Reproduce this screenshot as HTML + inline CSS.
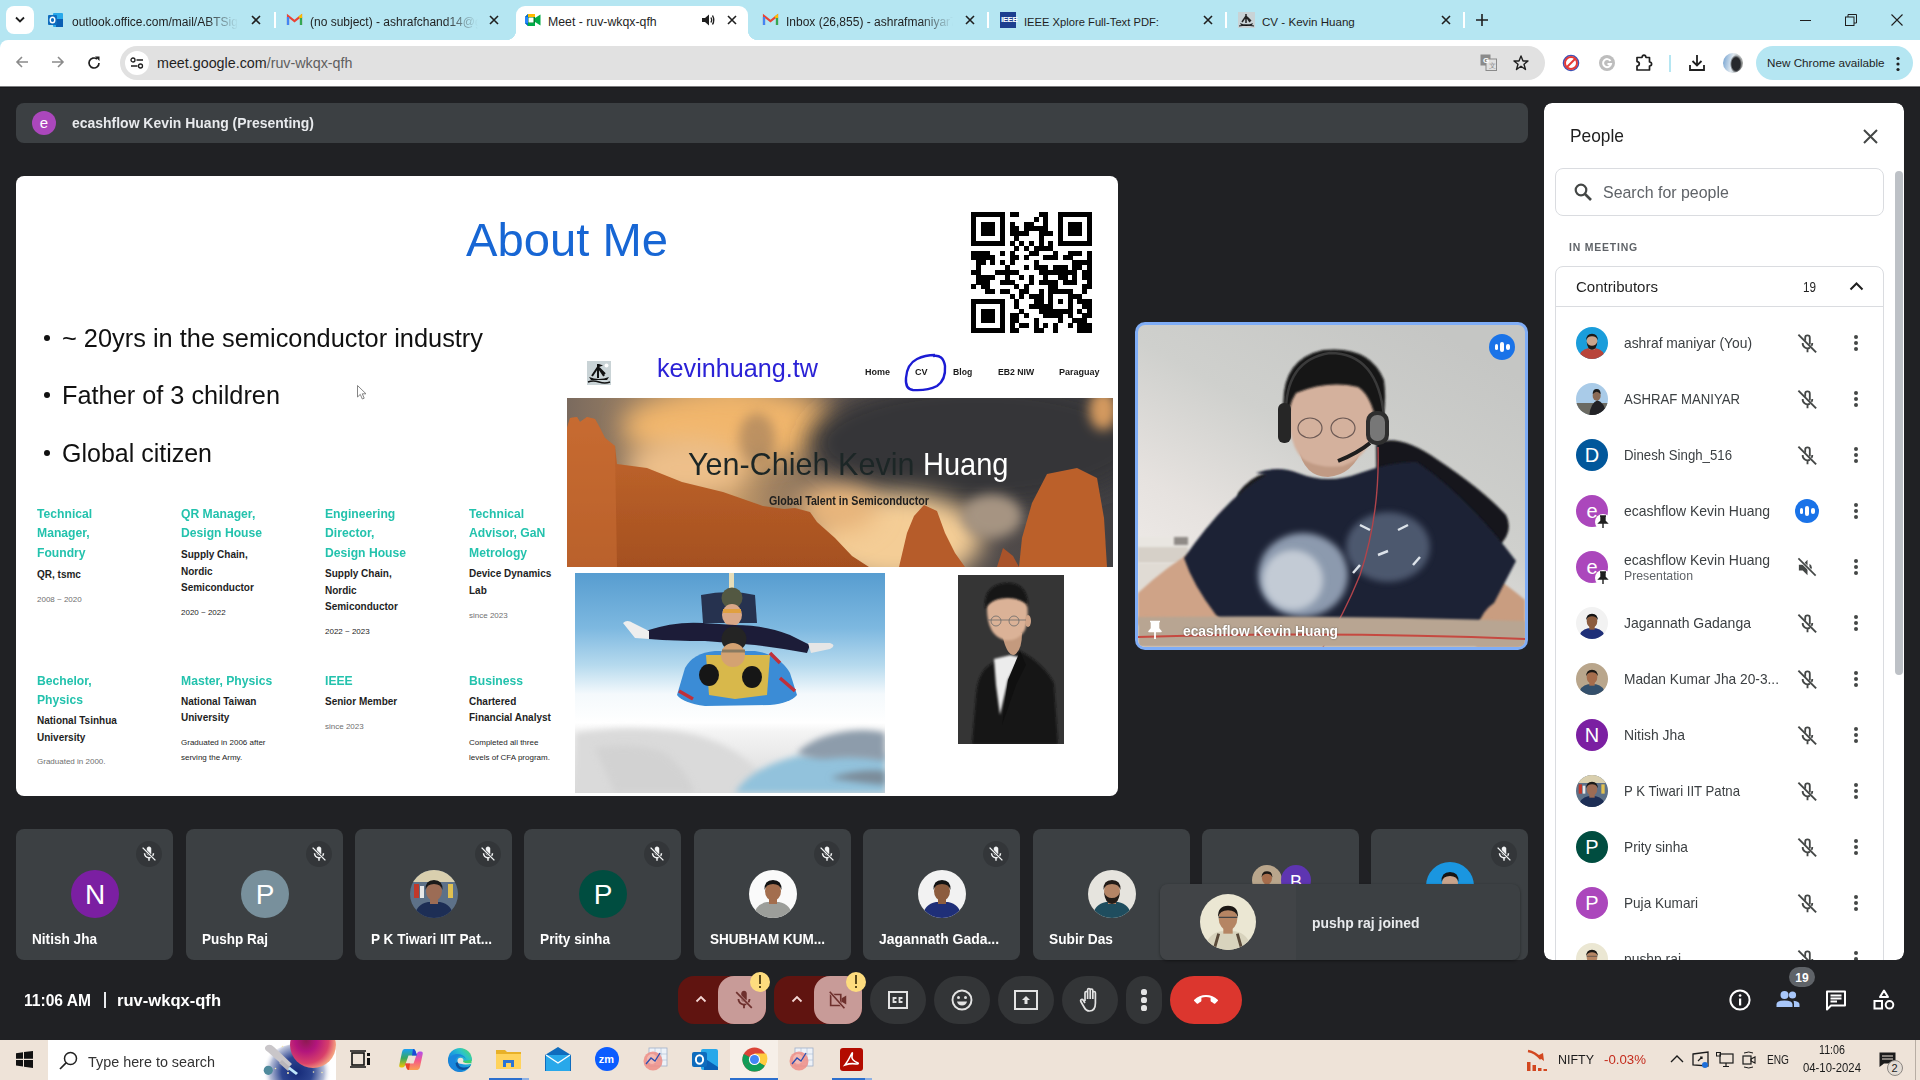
<!DOCTYPE html>
<html><head><meta charset="utf-8">
<style>
*{margin:0;padding:0;box-sizing:border-box}
html,body{width:1920px;height:1080px;overflow:hidden;background:#202124;font-family:"Liberation Sans",sans-serif}
.a{position:absolute}
svg{position:absolute;overflow:visible}
#tabs{left:0;top:0;width:1920px;height:48px;background:#b5e6f2}
#toolbar{left:0;top:40px;width:1920px;height:46px;background:#fff}
.tt{position:absolute;top:14.5px;font-size:12px;line-height:14px;color:#1f1f1f;white-space:nowrap;overflow:hidden;
 -webkit-mask-image:linear-gradient(to right,#000 80%,transparent)}
.sep{position:absolute;top:12px;width:2px;height:16px;background:#fff}
#meet{left:0;top:86px;width:1920px;height:954px;background:#202124}
#taskbar{left:0;top:1040px;width:1920px;height:40px;background:#eee3d8}
</style></head>
<body>
<!-- ================= TAB STRIP ================= -->
<div id="tabs" class="a">
  <div class="a" style="left:6px;top:6px;width:28px;height:28px;background:#fff;border-radius:8px"></div>
  <svg style="left:14px;top:16px" width="12" height="8" viewBox="0 0 12 8"><path d="M2 1.5 L6 5.5 L10 1.5" stroke="#1f1f1f" stroke-width="1.8" fill="none"/></svg>
  <!-- tab1 outlook -->
  <svg style="left:48px;top:12px" width="16" height="16" viewBox="0 0 16 16"><rect x="5" y="1" width="10" height="14" rx="1" fill="#28a8ea"/><rect x="8" y="7" width="7" height="8" fill="#0a5fb4"/><rect x="0" y="3" width="9" height="10" rx="1" fill="#0f6cbd"/><ellipse cx="4.5" cy="8" rx="2.3" ry="2.8" fill="none" stroke="#fff" stroke-width="1.4"/></svg>
  <div class="tt" style="left:72px;width:166px">outlook.office.com/mail/ABTSig</div>
  <svg style="left:251px;top:15px" width="10" height="10" viewBox="0 0 10 10"><path d="M1 1L9 9M9 1L1 9" stroke="#1f1f1f" stroke-width="1.6"/></svg>
  <div class="sep" style="left:274px"></div>
  <!-- tab2 gmail -->
  <svg style="left:287px;top:14px" width="15" height="12" viewBox="0 0 15 12"><path d="M1 11V2L7.5 7L14 2V11" fill="none" stroke="#ea4335" stroke-width="2.2"/><path d="M1 11V3" stroke="#4285f4" stroke-width="2.2"/><path d="M14 11V3" stroke="#34a853" stroke-width="2.2"/><path d="M12 3.5L14 2V4" stroke="#fbbc04" stroke-width="2.2"/></svg>
  <div class="tt" style="left:310px;width:168px">(no subject) - ashrafchand14@gmail</div>
  <svg style="left:489px;top:15px" width="10" height="10" viewBox="0 0 10 10"><path d="M1 1L9 9M9 1L1 9" stroke="#1f1f1f" stroke-width="1.6"/></svg>
  <!-- active tab -->
  <div class="a" style="left:516px;top:6px;width:232px;height:36px;background:#fff;border-radius:9px 9px 0 0"></div>
  <div class="a" style="left:506px;top:30px;width:10px;height:10px;background:radial-gradient(circle at 0 0,transparent 10px,#fff 10.5px)"></div>
  <div class="a" style="left:748px;top:30px;width:10px;height:10px;background:radial-gradient(circle at 100% 0,transparent 10px,#fff 10.5px)"></div>
  <svg style="left:525px;top:14px" width="16" height="12" viewBox="0 0 16 12"><path d="M0 3L3 0H10V12H3L0 9Z" fill="#00832d"/><path d="M0 3L3 0V12L0 9Z" fill="#0066da"/><path d="M3 0H10V3H3Z" fill="#ffba00"/><path d="M0 3H3V9H0Z" fill="#2684fc"/><path d="M3 9H10V12H3Z" fill="#00ac47"/><rect x="3.5" y="3.5" width="5" height="5" fill="#fff"/><path d="M10 4L15.5 0.5V11.5L10 8Z" fill="#00ac47"/></svg>
  <div class="tt" style="left:548px;width:150px;font-size:12.3px;-webkit-mask-image:none">Meet - ruv-wkqx-qfh</div>
  <svg style="left:701px;top:13px" width="14" height="14" viewBox="0 0 14 14"><path d="M1 5H4L8 1.5V12.5L4 9H1Z" fill="#1f1f1f"/><path d="M10 4.5Q11.5 7 10 9.5M11.5 2.5Q14 7 11.5 11.5" stroke="#1f1f1f" stroke-width="1.4" fill="none"/></svg>
  <svg style="left:727px;top:15px" width="10" height="10" viewBox="0 0 10 10"><path d="M1 1L9 9M9 1L1 9" stroke="#1f1f1f" stroke-width="1.6"/></svg>
  <!-- tab4 gmail inbox -->
  <svg style="left:763px;top:14px" width="15" height="12" viewBox="0 0 15 12"><path d="M1 11V2L7.5 7L14 2V11" fill="none" stroke="#ea4335" stroke-width="2.2"/><path d="M1 11V3" stroke="#4285f4" stroke-width="2.2"/><path d="M14 11V3" stroke="#34a853" stroke-width="2.2"/><path d="M12 3.5L14 2V4" stroke="#fbbc04" stroke-width="2.2"/></svg>
  <div class="tt" style="left:786px;width:167px">Inbox (26,855) - ashrafmaniyar7</div>
  <svg style="left:965px;top:15px" width="10" height="10" viewBox="0 0 10 10"><path d="M1 1L9 9M9 1L1 9" stroke="#1f1f1f" stroke-width="1.6"/></svg>
  <div class="sep" style="left:987px"></div>
  <!-- tab5 ieee -->
  <div class="a" style="left:1000px;top:12px;width:16px;height:16px;background:#1d3f8f"></div>
  <div class="a" style="left:1001px;top:15px;font-size:8px;font-weight:bold;color:#fff;letter-spacing:-0.5px">IEEE</div>
  <div class="tt" style="left:1024px;width:170px;font-size:11.2px;-webkit-mask-image:none">IEEE Xplore Full-Text PDF:</div>
  <svg style="left:1203px;top:15px" width="10" height="10" viewBox="0 0 10 10"><path d="M1 1L9 9M9 1L1 9" stroke="#1f1f1f" stroke-width="1.6"/></svg>
  <div class="sep" style="left:1225px"></div>
  <!-- tab6 cv -->
  <svg style="left:1238px;top:12px" width="17" height="16" viewBox="0 0 17 16"><rect width="17" height="16" fill="#c9d3d6"/><path d="M2 11Q8.5 14 15 11L14 13H3Z" fill="#222"/><path d="M8 2V11M4 10L8 4L12 10M9 5L13 9" stroke="#222" stroke-width="1.5" fill="none"/><path d="M1 14Q8 12 16 14" stroke="#222" stroke-width="1"/></svg>
  <div class="tt" style="left:1262px;width:170px;font-size:11.6px;-webkit-mask-image:none">CV - Kevin Huang</div>
  <svg style="left:1441px;top:15px" width="10" height="10" viewBox="0 0 10 10"><path d="M1 1L9 9M9 1L1 9" stroke="#1f1f1f" stroke-width="1.6"/></svg>
  <div class="sep" style="left:1463px"></div>
  <svg style="left:1475px;top:13px" width="14" height="14" viewBox="0 0 14 14"><path d="M7 1V13M1 7H13" stroke="#1f1f1f" stroke-width="1.6"/></svg>
  <!-- window controls -->
  <div class="a" style="left:1800px;top:20px;width:11px;height:1px;background:#1f1f1f"></div>
  <svg style="left:1845px;top:14px" width="12" height="12" viewBox="0 0 12 12"><rect x="0.5" y="3" width="8.5" height="8.5" fill="none" stroke="#1f1f1f" stroke-width="1"/><path d="M3 3V0.5H11.5V9H9" fill="none" stroke="#1f1f1f" stroke-width="1"/></svg>
  <svg style="left:1891px;top:14px" width="12" height="12" viewBox="0 0 12 12"><path d="M0.5 0.5L11.5 11.5M11.5 0.5L0.5 11.5" stroke="#1f1f1f" stroke-width="1.1"/></svg>
</div>
<!-- ================= TOOLBAR ================= -->
<div class="a" style="left:0;top:86px;width:1920px;height:1px;background:#7d7e80"></div><div class="a" style="left:0;top:87px;width:1920px;height:1px;background:#17181b"></div>
<div id="toolbar" class="a" style="border-radius:8px 0 0 0">
  <svg style="left:15px;top:15px" width="14" height="14" viewBox="0 0 14 14"><path d="M13 7H2M7 2L2 7L7 12" stroke="#8b8b8b" stroke-width="1.6" fill="none"/></svg>
  <svg style="left:51px;top:15px" width="14" height="14" viewBox="0 0 14 14"><path d="M1 7H12M7 2L12 7L7 12" stroke="#8b8b8b" stroke-width="1.6" fill="none"/></svg>
  <svg style="left:87px;top:16px" width="14" height="14" viewBox="0 0 14 14"><path d="M12 7A5 5 0 1 1 10 3" stroke="#1f1f1f" stroke-width="1.7" fill="none"/><path d="M8 0.5H12.5V5Z" fill="#1f1f1f"/></svg>
  <div class="a" style="left:120px;top:6px;width:1425px;height:34px;background:#e1e1e1;border-radius:17px"></div>
  <div class="a" style="left:125px;top:11px;width:24px;height:24px;background:#fff;border-radius:50%"></div>
  <svg style="left:130px;top:17px" width="14" height="12" viewBox="0 0 14 12"><circle cx="3" cy="3" r="2" fill="none" stroke="#1f1f1f" stroke-width="1.3"/><path d="M6.5 3H13M1 9H7.5" stroke="#1f1f1f" stroke-width="1.3"/><circle cx="10.5" cy="9" r="2" fill="none" stroke="#1f1f1f" stroke-width="1.3"/></svg>
  <div class="a" style="left:157px;top:15px;font-size:14.3px;line-height:16px;color:#1f1f1f;white-space:nowrap">meet.google.com<span style="color:#5e5e5e">/ruv-wkqx-qfh</span></div>
  <svg style="left:1480px;top:14px" width="17" height="17" viewBox="0 0 17 17"><rect x="0.5" y="0.5" width="10" height="11" fill="#8a8a8a"/><rect x="6" y="5" width="10.5" height="11.5" fill="#e1e1e1" stroke="#8a8a8a" stroke-width="1"/><text x="3" y="9" font-size="8" font-weight="bold" fill="#fff" font-family="Liberation Sans">G</text><text x="9" y="14" font-size="7" fill="#8a8a8a" font-family="Liberation Sans">文</text></svg>
  <svg style="left:1513px;top:15px" width="16" height="16" viewBox="0 0 16 16"><path d="M8 1L10 6H15L11 9.2L12.5 14.5L8 11.3L3.5 14.5L5 9.2L1 6H6Z" fill="none" stroke="#1f1f1f" stroke-width="1.4" stroke-linejoin="round"/></svg>
  <svg style="left:1562px;top:14px" width="18" height="18" viewBox="0 0 18 18"><circle cx="9" cy="9" r="7.5" fill="none" stroke="#3f51b5" stroke-width="1.6"/><circle cx="9" cy="9" r="6" fill="none" stroke="#e53935" stroke-width="2"/><path d="M5 13L13 5" stroke="#e53935" stroke-width="2"/></svg>
  <svg style="left:1598px;top:14px" width="18" height="18" viewBox="0 0 18 18"><circle cx="9" cy="9" r="8" fill="#bdbdbd"/><path d="M12.5 7A4 4 0 1 0 13 10H9.5" stroke="#fff" stroke-width="2" fill="none"/></svg>
  <svg style="left:1635px;top:13px" width="18" height="18" viewBox="0 0 18 18"><path d="M2 4.5H7Q7.3 2.2 9 2.2Q10.7 2.2 11 4.5H14.5V9Q16.6 9.2 16.6 11Q16.6 12.8 14.5 13V17H2V13Q4.3 12.8 4.3 10.8Q4.3 8.8 2 8.6Z" fill="none" stroke="#1f1f1f" stroke-width="1.7" stroke-linejoin="round"/></svg>
  <div class="a" style="left:1669px;top:15px;width:2px;height:17px;background:#b5e6f2"></div>
  <svg style="left:1688px;top:14px" width="18" height="18" viewBox="0 0 18 18"><path d="M9 1V11M4.5 7L9 11.5L13.5 7" stroke="#1f1f1f" stroke-width="1.8" fill="none"/><path d="M2 11V16H16V11" stroke="#1f1f1f" stroke-width="1.8" fill="none"/></svg>
  <div class="a" style="left:1723px;top:13px;width:20px;height:20px;border-radius:50%;background:radial-gradient(ellipse 30% 45% at 65% 55%,#26282c 0 70%,transparent 100%),linear-gradient(100deg,#6f9fd0 0%,#dfe8ef 45%,#8a8a86 100%)"></div>
  <div class="a" style="left:1756px;top:6px;width:157px;height:34px;background:#b5e6f2;border-radius:17px"></div>
  <div class="a" style="left:1767px;top:16px;font-size:11.7px;line-height:14px;color:#1f1f1f;white-space:nowrap">New Chrome available</div>
  <svg style="left:1895px;top:16px" width="6" height="16" viewBox="0 0 6 16"><circle cx="3" cy="2.5" r="1.6" fill="#1f1f1f"/><circle cx="3" cy="8" r="1.6" fill="#1f1f1f"/><circle cx="3" cy="13.5" r="1.6" fill="#1f1f1f"/></svg>
</div>
<div class="a" style="left:16px;top:103px;width:1512px;height:40px;background:#3c4043;border-radius:8px"></div>
<div class="a" style="left:32px;top:111px;width:24px;height:24px;border-radius:50%;background:#ab47bc"></div>
<div class="a" style="left:39.83px;top:115.30px;font-size:15px;line-height:15px;color:#fff;white-space:nowrap;">e</div>
<div class="a" style="left:72.00px;top:115.30px;font-size:15px;line-height:15px;color:#e8eaed;font-weight:bold;white-space:nowrap;transform:scaleX(0.9306);transform-origin:0 0;">ecashflow Kevin Huang (Presenting)</div>
<div class="a" style="left:16px;top:176px;width:1102px;height:620px;background:#fff;border-radius:8px"></div>
<div class="a" style="left:466.00px;top:216.21px;font-size:47px;line-height:47px;color:#1766d4;white-space:nowrap;transform:scaleX(1.0041);transform-origin:0 0;">About Me</div>
<div class="a" style="left:44px;top:335px;width:6px;height:6px;border-radius:50%;background:#111"></div>
<div class="a" style="left:44px;top:392px;width:6px;height:6px;border-radius:50%;background:#111"></div>
<div class="a" style="left:44px;top:450px;width:6px;height:6px;border-radius:50%;background:#111"></div>
<div class="a" style="left:62.00px;top:325.84px;font-size:25px;line-height:25px;color:#111;white-space:nowrap;transform:scaleX(1.0150);transform-origin:0 0;">~ 20yrs in the semiconductor industry</div>
<div class="a" style="left:62.00px;top:382.84px;font-size:25px;line-height:25px;color:#111;white-space:nowrap;transform:scaleX(1.0121);transform-origin:0 0;">Father of 3 children</div>
<div class="a" style="left:62.00px;top:440.84px;font-size:25px;line-height:25px;color:#111;white-space:nowrap;transform:scaleX(0.9995);transform-origin:0 0;">Global citizen</div>
<svg style="left:357px;top:385px;" width="10" height="15" viewBox="0 0 10 15"><path d="M0.5 0.5V12L3.3 9.4L5.3 14L7.2 13.2L5.3 8.8H9Z" fill="#fff" stroke="#777" stroke-width="0.9" stroke-linejoin="round"/></svg>
<div class="a" style="left:37.00px;top:506.50px;font-size:13px;line-height:13px;color:#23c2ad;font-weight:bold;white-space:nowrap;transform:scaleX(0.9350);transform-origin:0 0;">Technical</div>
<div class="a" style="left:37.00px;top:526.00px;font-size:13px;line-height:13px;color:#23c2ad;font-weight:bold;white-space:nowrap;transform:scaleX(0.9350);transform-origin:0 0;">Manager,</div>
<div class="a" style="left:37.00px;top:545.50px;font-size:13px;line-height:13px;color:#23c2ad;font-weight:bold;white-space:nowrap;transform:scaleX(0.9350);transform-origin:0 0;">Foundry</div>
<div class="a" style="left:37.00px;top:569.53px;font-size:10px;line-height:10px;color:#1e1e1e;font-weight:bold;white-space:nowrap;">QR, tsmc</div>
<div class="a" style="left:37.00px;top:596.23px;font-size:8px;line-height:8px;color:#6f6f6f;white-space:nowrap;">2008 ~ 2020</div>
<div class="a" style="left:181.00px;top:506.50px;font-size:13px;line-height:13px;color:#23c2ad;font-weight:bold;white-space:nowrap;transform:scaleX(0.9350);transform-origin:0 0;">QR Manager,</div>
<div class="a" style="left:181.00px;top:526.00px;font-size:13px;line-height:13px;color:#23c2ad;font-weight:bold;white-space:nowrap;transform:scaleX(0.9350);transform-origin:0 0;">Design House</div>
<div class="a" style="left:181.00px;top:549.53px;font-size:10px;line-height:10px;color:#1e1e1e;font-weight:bold;white-space:nowrap;">Supply Chain,</div>
<div class="a" style="left:181.00px;top:566.53px;font-size:10px;line-height:10px;color:#1e1e1e;font-weight:bold;white-space:nowrap;">Nordic</div>
<div class="a" style="left:181.00px;top:582.53px;font-size:10px;line-height:10px;color:#1e1e1e;font-weight:bold;white-space:nowrap;">Semiconductor</div>
<div class="a" style="left:181.00px;top:609.23px;font-size:8px;line-height:8px;color:#1e1e1e;white-space:nowrap;">2020 ~ 2022</div>
<div class="a" style="left:325.00px;top:506.50px;font-size:13px;line-height:13px;color:#23c2ad;font-weight:bold;white-space:nowrap;transform:scaleX(0.9350);transform-origin:0 0;">Engineering</div>
<div class="a" style="left:325.00px;top:526.00px;font-size:13px;line-height:13px;color:#23c2ad;font-weight:bold;white-space:nowrap;transform:scaleX(0.9350);transform-origin:0 0;">Director,</div>
<div class="a" style="left:325.00px;top:545.50px;font-size:13px;line-height:13px;color:#23c2ad;font-weight:bold;white-space:nowrap;transform:scaleX(0.9350);transform-origin:0 0;">Design House</div>
<div class="a" style="left:325.00px;top:569.03px;font-size:10px;line-height:10px;color:#1e1e1e;font-weight:bold;white-space:nowrap;">Supply Chain,</div>
<div class="a" style="left:325.00px;top:585.53px;font-size:10px;line-height:10px;color:#1e1e1e;font-weight:bold;white-space:nowrap;">Nordic</div>
<div class="a" style="left:325.00px;top:602.03px;font-size:10px;line-height:10px;color:#1e1e1e;font-weight:bold;white-space:nowrap;">Semiconductor</div>
<div class="a" style="left:325.00px;top:628.23px;font-size:8px;line-height:8px;color:#1e1e1e;white-space:nowrap;">2022 ~ 2023</div>
<div class="a" style="left:469.00px;top:506.50px;font-size:13px;line-height:13px;color:#23c2ad;font-weight:bold;white-space:nowrap;transform:scaleX(0.9350);transform-origin:0 0;">Technical</div>
<div class="a" style="left:469.00px;top:526.00px;font-size:13px;line-height:13px;color:#23c2ad;font-weight:bold;white-space:nowrap;transform:scaleX(0.9350);transform-origin:0 0;">Advisor, GaN</div>
<div class="a" style="left:469.00px;top:545.50px;font-size:13px;line-height:13px;color:#23c2ad;font-weight:bold;white-space:nowrap;transform:scaleX(0.9350);transform-origin:0 0;">Metrology</div>
<div class="a" style="left:469.00px;top:569.03px;font-size:10px;line-height:10px;color:#1e1e1e;font-weight:bold;white-space:nowrap;">Device Dynamics</div>
<div class="a" style="left:469.00px;top:585.53px;font-size:10px;line-height:10px;color:#1e1e1e;font-weight:bold;white-space:nowrap;">Lab</div>
<div class="a" style="left:469.00px;top:611.73px;font-size:8px;line-height:8px;color:#6f6f6f;white-space:nowrap;">since 2023</div>
<div class="a" style="left:37.00px;top:674.00px;font-size:13px;line-height:13px;color:#23c2ad;font-weight:bold;white-space:nowrap;transform:scaleX(0.9350);transform-origin:0 0;">Bechelor,</div>
<div class="a" style="left:37.00px;top:693.00px;font-size:13px;line-height:13px;color:#23c2ad;font-weight:bold;white-space:nowrap;transform:scaleX(0.9350);transform-origin:0 0;">Physics</div>
<div class="a" style="left:37.00px;top:715.53px;font-size:10px;line-height:10px;color:#1e1e1e;font-weight:bold;white-space:nowrap;">National Tsinhua</div>
<div class="a" style="left:37.00px;top:732.53px;font-size:10px;line-height:10px;color:#1e1e1e;font-weight:bold;white-space:nowrap;">University</div>
<div class="a" style="left:37.00px;top:758.23px;font-size:8px;line-height:8px;color:#6f6f6f;white-space:nowrap;">Graduated in 2000.</div>
<div class="a" style="left:181.00px;top:674.00px;font-size:13px;line-height:13px;color:#23c2ad;font-weight:bold;white-space:nowrap;transform:scaleX(0.9350);transform-origin:0 0;">Master, Physics</div>
<div class="a" style="left:181.00px;top:697.03px;font-size:10px;line-height:10px;color:#1e1e1e;font-weight:bold;white-space:nowrap;">National Taiwan</div>
<div class="a" style="left:181.00px;top:713.03px;font-size:10px;line-height:10px;color:#1e1e1e;font-weight:bold;white-space:nowrap;">University</div>
<div class="a" style="left:181.00px;top:739.23px;font-size:8px;line-height:8px;color:#1e1e1e;white-space:nowrap;">Graduated in 2006 after</div>
<div class="a" style="left:181.00px;top:754.23px;font-size:8px;line-height:8px;color:#1e1e1e;white-space:nowrap;">serving the Army.</div>
<div class="a" style="left:325.00px;top:674.00px;font-size:13px;line-height:13px;color:#23c2ad;font-weight:bold;white-space:nowrap;transform:scaleX(0.9350);transform-origin:0 0;">IEEE</div>
<div class="a" style="left:325.00px;top:697.03px;font-size:10px;line-height:10px;color:#1e1e1e;font-weight:bold;white-space:nowrap;">Senior Member</div>
<div class="a" style="left:325.00px;top:723.23px;font-size:8px;line-height:8px;color:#6f6f6f;white-space:nowrap;">since 2023</div>
<div class="a" style="left:469.00px;top:674.00px;font-size:13px;line-height:13px;color:#23c2ad;font-weight:bold;white-space:nowrap;transform:scaleX(0.9350);transform-origin:0 0;">Business</div>
<div class="a" style="left:469.00px;top:697.03px;font-size:10px;line-height:10px;color:#1e1e1e;font-weight:bold;white-space:nowrap;">Chartered</div>
<div class="a" style="left:469.00px;top:713.03px;font-size:10px;line-height:10px;color:#1e1e1e;font-weight:bold;white-space:nowrap;">Financial Analyst</div>
<div class="a" style="left:469.00px;top:739.23px;font-size:8px;line-height:8px;color:#1e1e1e;white-space:nowrap;">Completed all three</div>
<div class="a" style="left:469.00px;top:754.23px;font-size:8px;line-height:8px;color:#1e1e1e;white-space:nowrap;">levels of CFA program.</div>
<div class="a" style="left:587px;top:361px;width:24px;height:24px;background:#c9d3d6"></div>
<svg style="left:587px;top:361px;" width="24" height="24" viewBox="0 0 24 24"><path d="M11 3V17M5 15L11 6L17 15M12 7L18 13" stroke="#111" stroke-width="2" fill="none"/><path d="M12 3L16 4.5L12 6" fill="#111"/><path d="M2 16Q12 20 22 16L20 19H4Z" fill="#111"/><path d="M1 21Q6 19 12 21Q18 23 23 21" stroke="#111" stroke-width="1.4" fill="none"/><circle cx="19.5" cy="4.5" r="2" fill="#fff"/></svg>
<div class="a" style="left:657.40px;top:355.61px;font-size:25.5px;line-height:25.5px;color:#2b22d6;white-space:nowrap;transform:scaleX(0.9876);transform-origin:0 0;">kevinhuang.tw</div>
<div class="a" style="left:865.00px;top:367.88px;font-size:9px;line-height:9px;color:#1a1a1a;font-weight:bold;white-space:nowrap;transform:scaleX(0.9998);transform-origin:0 0;">Home</div>
<div class="a" style="left:915.00px;top:367.88px;font-size:9px;line-height:9px;color:#1a1a1a;font-weight:bold;white-space:nowrap;transform:scaleX(1.0078);transform-origin:0 0;">CV</div>
<div class="a" style="left:952.50px;top:367.88px;font-size:9px;line-height:9px;color:#1a1a1a;font-weight:bold;white-space:nowrap;transform:scaleX(0.9602);transform-origin:0 0;">Blog</div>
<div class="a" style="left:997.50px;top:367.88px;font-size:9px;line-height:9px;color:#1a1a1a;font-weight:bold;white-space:nowrap;transform:scaleX(0.9626);transform-origin:0 0;">EB2 NIW</div>
<div class="a" style="left:1059.40px;top:367.88px;font-size:9px;line-height:9px;color:#1a1a1a;font-weight:bold;white-space:nowrap;transform:scaleX(1.0019);transform-origin:0 0;">Paraguay</div>
<svg style="left:903px;top:352px;" width="44" height="40" viewBox="0 0 44 40"><path d="M30 4Q40 2 42 14Q43 28 34 34Q24 39 10 38Q2 37 3 26Q4 12 14 7Q22 3 32 3" fill="none" stroke="#1b1bd4" stroke-width="2.4"/></svg>
<svg style="left:567px;top:398px;overflow:hidden" width="546" height="169" viewBox="0 0 546 169">
<defs>
<filter id="c12" x="-50%" y="-50%" width="200%" height="200%"><feGaussianBlur stdDeviation="12"/></filter>
<filter id="c6" x="-50%" y="-50%" width="200%" height="200%"><feGaussianBlur stdDeviation="6"/></filter>
<filter id="c1" x="-50%" y="-50%" width="200%" height="200%"><feGaussianBlur stdDeviation="0.7"/></filter>
<linearGradient id="sky" x1="0" y1="0" x2="1" y2="0"><stop offset="0" stop-color="#7a6a5e"/><stop offset=".3" stop-color="#c49a68"/><stop offset=".5" stop-color="#6a5d56"/><stop offset="1" stop-color="#403f42"/></linearGradient>
<linearGradient id="rock" x1="0" y1="0" x2="0" y2="1"><stop offset="0" stop-color="#c5692f"/><stop offset="1" stop-color="#a5501f"/></linearGradient>
</defs>
<rect width="546" height="169" fill="url(#sky)"/>
<ellipse cx="165" cy="28" rx="110" ry="36" fill="#f1b66c" filter="url(#c12)"/>
<ellipse cx="120" cy="70" rx="60" ry="30" fill="#eec08a" filter="url(#c12)"/>
<ellipse cx="190" cy="40" rx="18" ry="25" fill="#7f6654" filter="url(#c6)" opacity=".45"/>
<ellipse cx="410" cy="45" rx="170" ry="65" fill="#363638" filter="url(#c12)"/>
<ellipse cx="330" cy="140" rx="85" ry="45" fill="#f4cd96" filter="url(#c12)"/>
<ellipse cx="270" cy="110" rx="40" ry="25" fill="#e9b67c" filter="url(#c12)"/>
<ellipse cx="425" cy="118" rx="30" ry="22" fill="#a69482" filter="url(#c6)"/>
<ellipse cx="536" cy="12" rx="14" ry="20" fill="#d49a5e" filter="url(#c6)"/>
<path d="M0 30L3 20L10 19L13 24L20 19L28 21L33 30L38 40L48 48L50 66L80 70L115 84L156 94L196 108L217 111L228 110L243 114L250 124L268 140L285 158L302 169H0Z" fill="url(#rock)" filter="url(#c1)"/>
<path d="M0 30L3 20L10 19L13 24L20 19L28 21L33 30L38 40L48 48L50 169H0Z" fill="#c86d33" opacity=".6"/>
<path d="M332 169L340 135L347 118L357 107L370 113L378 135L388 155L398 169Z" fill="#b65b2a" filter="url(#c1)"/>
<path d="M452 169L455 140L465 105L480 76L510 70L530 80L537 120L540 169Z" fill="#bb602c" filter="url(#c1)"/>
<path d="M430 169L436 150L446 158L452 169Z" fill="#a9532a"/>
</svg>
<div class="a" style="left:688.00px;top:449.34px;font-size:31.5px;line-height:31.5px;color:#1c2626;white-space:nowrap;transform:scaleX(0.9700);transform-origin:0 0;">Yen-Chieh Kevin </div>
<div class="a" style="left:923.00px;top:449.34px;font-size:31.5px;line-height:31.5px;color:#fff;white-space:nowrap;transform:scaleX(0.9211);transform-origin:0 0;">Huang</div>
<div class="a" style="left:768.50px;top:495.04px;font-size:12px;line-height:12px;color:#1e1e1e;font-weight:bold;white-space:nowrap;transform:scaleX(0.8899);transform-origin:0 0;">Global Talent in Semiconductor</div>
<svg style="left:575px;top:573px;overflow:hidden" width="310" height="220" viewBox="0 0 310 220">
<defs>
<filter id="s4" x="-50%" y="-50%" width="200%" height="200%"><feGaussianBlur stdDeviation="3"/></filter>
<filter id="s1" x="-50%" y="-50%" width="200%" height="200%"><feGaussianBlur stdDeviation="0.7"/></filter>
<linearGradient id="skyg" x1="0" y1="0" x2="0" y2="1"><stop offset="0" stop-color="#579dd0"/><stop offset=".25" stop-color="#7db8e0"/><stop offset=".42" stop-color="#b6daee"/><stop offset=".55" stop-color="#f4f9fc"/><stop offset=".68" stop-color="#ffffff"/><stop offset=".72" stop-color="#f4f4f4"/><stop offset="1" stop-color="#d8d8d8"/></linearGradient>
</defs>
<rect width="310" height="220" fill="url(#skyg)"/>
<path d="M0 160Q50 152 100 158Q150 165 180 195L200 220H0Z" fill="#dadada" filter="url(#s4)"/>
<path d="M20 175Q60 168 90 180Q110 195 120 220H40Z" fill="#cdcdcd" filter="url(#s4)" opacity=".6"/>
<path d="M160 220Q175 195 222 183Q265 175 310 182V220Z" fill="#92c2dc" filter="url(#s4)"/>
<path d="M222 180Q240 162 275 158Q295 156 310 160V188Q280 182 250 186Q235 186 222 180Z" fill="#8d9cab" filter="url(#s4)"/>
<path d="M255 205Q285 195 310 198V212Q285 210 255 205Z" fill="#7b8c9a" filter="url(#s4)"/>
<!-- instructor -->
<rect x="154" y="0" width="5" height="18" fill="#e6ddb8"/>
<path d="M126 22Q155 16 180 22L182 50H128Z" fill="#27324f" filter="url(#s1)"/>
<circle cx="157" cy="25" r="10.5" fill="#535842"/>
<ellipse cx="157" cy="42" rx="10" ry="11" fill="#d9a888"/>
<path d="M148 38H166" stroke="#e0a040" stroke-width="4"/>
<path d="M70 58Q100 48 128 50L160 52Q190 52 215 62L235 72L232 80Q205 75 180 72L130 68Q100 68 74 66Z" fill="#1b1d38" filter="url(#s1)"/>
<path d="M48 50Q52 46 58 50L74 58L74 66L60 65Z" fill="#eeeeee"/>
<path d="M233 70L255 70Q262 72 255 76L236 80Z" fill="#e6e6e6"/>
<!-- student -->
<path d="M110 95Q118 80 140 78L180 78Q205 82 215 100L222 122Q215 130 195 132L130 133Q108 130 102 122Z" fill="#3a8cd6" filter="url(#s1)"/>
<path d="M131 82H195L192 122L160 126L134 122Z" fill="#d8b84c" filter="url(#s1)"/>
<path d="M104 118L118 126M205 105L220 118M195 80L205 90" stroke="#c0303a" stroke-width="3.5"/>
<circle cx="159" cy="66" r="12.5" fill="#242424"/>
<ellipse cx="158" cy="82" rx="12" ry="12" fill="#d4a272"/>
<path d="M147 78H170" stroke="#8a7a60" stroke-width="3"/>
<ellipse cx="134" cy="102" rx="10" ry="11" fill="#161616"/>
<ellipse cx="177" cy="104" rx="10" ry="11" fill="#161616"/>
</svg>
<svg style="left:958px;top:575px;overflow:hidden" width="106" height="169" viewBox="0 0 106 169">
<defs><filter id="p1" x="-50%" y="-50%" width="200%" height="200%"><feGaussianBlur stdDeviation="0.8"/></filter></defs>
<rect width="106" height="169" fill="#353535"/>
<path d="M14 169L18 120Q20 95 35 88L50 80L62 76Q85 88 96 108L100 169Z" fill="#181818" filter="url(#p1)"/>
<path d="M36 84L52 80L62 82L50 105L42 140L38 110Z" fill="#ececec" filter="url(#p1)"/>
<path d="M62 76L50 105L44 150L58 110L68 90Z" fill="#101010"/>
<path d="M44 58Q48 80 56 80Q64 76 64 58Z" fill="#c49a7e"/>
<path d="M29 30Q28 60 46 65Q60 67 67 55Q71 44 69 28Q60 21 48 21Q35 21 29 30Z" fill="#dbb297" filter="url(#p1)"/>
<path d="M27 34Q25 10 48 8Q70 7 70 32Q67 24 50 23Q33 23 27 34Z" fill="#121212" filter="url(#p1)"/>
<ellipse cx="70" cy="46" rx="3" ry="6" fill="#d0a488"/>
<path d="M30 45H68" stroke="#6a6a6a" stroke-width=".8"/>
<circle cx="38" cy="46" r="5" fill="none" stroke="#6a6a6a" stroke-width=".8"/>
<circle cx="56" cy="46" r="5" fill="none" stroke="#6a6a6a" stroke-width=".8"/>
</svg>
<svg style="left:971.3px;top:212px" width="120.75" height="120.75" viewBox="0 0 25 25" shape-rendering="crispEdges"><g fill="#000"><rect x="0" y="0" width="1.02" height="1.02"/><rect x="1" y="0" width="1.02" height="1.02"/><rect x="2" y="0" width="1.02" height="1.02"/><rect x="3" y="0" width="1.02" height="1.02"/><rect x="4" y="0" width="1.02" height="1.02"/><rect x="5" y="0" width="1.02" height="1.02"/><rect x="6" y="0" width="1.02" height="1.02"/><rect x="8" y="0" width="1.02" height="1.02"/><rect x="9" y="0" width="1.02" height="1.02"/><rect x="14" y="0" width="1.02" height="1.02"/><rect x="15" y="0" width="1.02" height="1.02"/><rect x="18" y="0" width="1.02" height="1.02"/><rect x="19" y="0" width="1.02" height="1.02"/><rect x="20" y="0" width="1.02" height="1.02"/><rect x="21" y="0" width="1.02" height="1.02"/><rect x="22" y="0" width="1.02" height="1.02"/><rect x="23" y="0" width="1.02" height="1.02"/><rect x="24" y="0" width="1.02" height="1.02"/><rect x="0" y="1" width="1.02" height="1.02"/><rect x="6" y="1" width="1.02" height="1.02"/><rect x="13" y="1" width="1.02" height="1.02"/><rect x="15" y="1" width="1.02" height="1.02"/><rect x="18" y="1" width="1.02" height="1.02"/><rect x="24" y="1" width="1.02" height="1.02"/><rect x="0" y="2" width="1.02" height="1.02"/><rect x="2" y="2" width="1.02" height="1.02"/><rect x="3" y="2" width="1.02" height="1.02"/><rect x="4" y="2" width="1.02" height="1.02"/><rect x="6" y="2" width="1.02" height="1.02"/><rect x="8" y="2" width="1.02" height="1.02"/><rect x="11" y="2" width="1.02" height="1.02"/><rect x="12" y="2" width="1.02" height="1.02"/><rect x="15" y="2" width="1.02" height="1.02"/><rect x="18" y="2" width="1.02" height="1.02"/><rect x="20" y="2" width="1.02" height="1.02"/><rect x="21" y="2" width="1.02" height="1.02"/><rect x="22" y="2" width="1.02" height="1.02"/><rect x="24" y="2" width="1.02" height="1.02"/><rect x="0" y="3" width="1.02" height="1.02"/><rect x="2" y="3" width="1.02" height="1.02"/><rect x="3" y="3" width="1.02" height="1.02"/><rect x="4" y="3" width="1.02" height="1.02"/><rect x="6" y="3" width="1.02" height="1.02"/><rect x="8" y="3" width="1.02" height="1.02"/><rect x="9" y="3" width="1.02" height="1.02"/><rect x="11" y="3" width="1.02" height="1.02"/><rect x="12" y="3" width="1.02" height="1.02"/><rect x="13" y="3" width="1.02" height="1.02"/><rect x="14" y="3" width="1.02" height="1.02"/><rect x="15" y="3" width="1.02" height="1.02"/><rect x="18" y="3" width="1.02" height="1.02"/><rect x="20" y="3" width="1.02" height="1.02"/><rect x="21" y="3" width="1.02" height="1.02"/><rect x="22" y="3" width="1.02" height="1.02"/><rect x="24" y="3" width="1.02" height="1.02"/><rect x="0" y="4" width="1.02" height="1.02"/><rect x="2" y="4" width="1.02" height="1.02"/><rect x="3" y="4" width="1.02" height="1.02"/><rect x="4" y="4" width="1.02" height="1.02"/><rect x="6" y="4" width="1.02" height="1.02"/><rect x="8" y="4" width="1.02" height="1.02"/><rect x="9" y="4" width="1.02" height="1.02"/><rect x="10" y="4" width="1.02" height="1.02"/><rect x="11" y="4" width="1.02" height="1.02"/><rect x="14" y="4" width="1.02" height="1.02"/><rect x="15" y="4" width="1.02" height="1.02"/><rect x="16" y="4" width="1.02" height="1.02"/><rect x="18" y="4" width="1.02" height="1.02"/><rect x="20" y="4" width="1.02" height="1.02"/><rect x="21" y="4" width="1.02" height="1.02"/><rect x="22" y="4" width="1.02" height="1.02"/><rect x="24" y="4" width="1.02" height="1.02"/><rect x="0" y="5" width="1.02" height="1.02"/><rect x="6" y="5" width="1.02" height="1.02"/><rect x="9" y="5" width="1.02" height="1.02"/><rect x="14" y="5" width="1.02" height="1.02"/><rect x="18" y="5" width="1.02" height="1.02"/><rect x="24" y="5" width="1.02" height="1.02"/><rect x="0" y="6" width="1.02" height="1.02"/><rect x="1" y="6" width="1.02" height="1.02"/><rect x="2" y="6" width="1.02" height="1.02"/><rect x="3" y="6" width="1.02" height="1.02"/><rect x="4" y="6" width="1.02" height="1.02"/><rect x="5" y="6" width="1.02" height="1.02"/><rect x="6" y="6" width="1.02" height="1.02"/><rect x="8" y="6" width="1.02" height="1.02"/><rect x="10" y="6" width="1.02" height="1.02"/><rect x="12" y="6" width="1.02" height="1.02"/><rect x="14" y="6" width="1.02" height="1.02"/><rect x="16" y="6" width="1.02" height="1.02"/><rect x="18" y="6" width="1.02" height="1.02"/><rect x="19" y="6" width="1.02" height="1.02"/><rect x="20" y="6" width="1.02" height="1.02"/><rect x="21" y="6" width="1.02" height="1.02"/><rect x="22" y="6" width="1.02" height="1.02"/><rect x="23" y="6" width="1.02" height="1.02"/><rect x="24" y="6" width="1.02" height="1.02"/><rect x="9" y="7" width="1.02" height="1.02"/><rect x="11" y="7" width="1.02" height="1.02"/><rect x="13" y="7" width="1.02" height="1.02"/><rect x="14" y="7" width="1.02" height="1.02"/><rect x="15" y="7" width="1.02" height="1.02"/><rect x="16" y="7" width="1.02" height="1.02"/><rect x="0" y="8" width="1.02" height="1.02"/><rect x="1" y="8" width="1.02" height="1.02"/><rect x="2" y="8" width="1.02" height="1.02"/><rect x="3" y="8" width="1.02" height="1.02"/><rect x="6" y="8" width="1.02" height="1.02"/><rect x="8" y="8" width="1.02" height="1.02"/><rect x="12" y="8" width="1.02" height="1.02"/><rect x="13" y="8" width="1.02" height="1.02"/><rect x="17" y="8" width="1.02" height="1.02"/><rect x="20" y="8" width="1.02" height="1.02"/><rect x="21" y="8" width="1.02" height="1.02"/><rect x="22" y="8" width="1.02" height="1.02"/><rect x="24" y="8" width="1.02" height="1.02"/><rect x="0" y="9" width="1.02" height="1.02"/><rect x="1" y="9" width="1.02" height="1.02"/><rect x="2" y="9" width="1.02" height="1.02"/><rect x="3" y="9" width="1.02" height="1.02"/><rect x="4" y="9" width="1.02" height="1.02"/><rect x="8" y="9" width="1.02" height="1.02"/><rect x="9" y="9" width="1.02" height="1.02"/><rect x="11" y="9" width="1.02" height="1.02"/><rect x="15" y="9" width="1.02" height="1.02"/><rect x="16" y="9" width="1.02" height="1.02"/><rect x="17" y="9" width="1.02" height="1.02"/><rect x="19" y="9" width="1.02" height="1.02"/><rect x="20" y="9" width="1.02" height="1.02"/><rect x="24" y="9" width="1.02" height="1.02"/><rect x="1" y="10" width="1.02" height="1.02"/><rect x="2" y="10" width="1.02" height="1.02"/><rect x="4" y="10" width="1.02" height="1.02"/><rect x="6" y="10" width="1.02" height="1.02"/><rect x="8" y="10" width="1.02" height="1.02"/><rect x="13" y="10" width="1.02" height="1.02"/><rect x="21" y="10" width="1.02" height="1.02"/><rect x="22" y="10" width="1.02" height="1.02"/><rect x="23" y="10" width="1.02" height="1.02"/><rect x="24" y="10" width="1.02" height="1.02"/><rect x="1" y="11" width="1.02" height="1.02"/><rect x="7" y="11" width="1.02" height="1.02"/><rect x="11" y="11" width="1.02" height="1.02"/><rect x="13" y="11" width="1.02" height="1.02"/><rect x="14" y="11" width="1.02" height="1.02"/><rect x="15" y="11" width="1.02" height="1.02"/><rect x="17" y="11" width="1.02" height="1.02"/><rect x="18" y="11" width="1.02" height="1.02"/><rect x="19" y="11" width="1.02" height="1.02"/><rect x="21" y="11" width="1.02" height="1.02"/><rect x="22" y="11" width="1.02" height="1.02"/><rect x="24" y="11" width="1.02" height="1.02"/><rect x="0" y="12" width="1.02" height="1.02"/><rect x="1" y="12" width="1.02" height="1.02"/><rect x="5" y="12" width="1.02" height="1.02"/><rect x="6" y="12" width="1.02" height="1.02"/><rect x="7" y="12" width="1.02" height="1.02"/><rect x="8" y="12" width="1.02" height="1.02"/><rect x="9" y="12" width="1.02" height="1.02"/><rect x="14" y="12" width="1.02" height="1.02"/><rect x="15" y="12" width="1.02" height="1.02"/><rect x="16" y="12" width="1.02" height="1.02"/><rect x="17" y="12" width="1.02" height="1.02"/><rect x="18" y="12" width="1.02" height="1.02"/><rect x="19" y="12" width="1.02" height="1.02"/><rect x="20" y="12" width="1.02" height="1.02"/><rect x="21" y="12" width="1.02" height="1.02"/><rect x="23" y="12" width="1.02" height="1.02"/><rect x="24" y="12" width="1.02" height="1.02"/><rect x="1" y="13" width="1.02" height="1.02"/><rect x="2" y="13" width="1.02" height="1.02"/><rect x="3" y="13" width="1.02" height="1.02"/><rect x="4" y="13" width="1.02" height="1.02"/><rect x="7" y="13" width="1.02" height="1.02"/><rect x="10" y="13" width="1.02" height="1.02"/><rect x="12" y="13" width="1.02" height="1.02"/><rect x="15" y="13" width="1.02" height="1.02"/><rect x="18" y="13" width="1.02" height="1.02"/><rect x="19" y="13" width="1.02" height="1.02"/><rect x="21" y="13" width="1.02" height="1.02"/><rect x="23" y="13" width="1.02" height="1.02"/><rect x="24" y="13" width="1.02" height="1.02"/><rect x="1" y="14" width="1.02" height="1.02"/><rect x="2" y="14" width="1.02" height="1.02"/><rect x="3" y="14" width="1.02" height="1.02"/><rect x="6" y="14" width="1.02" height="1.02"/><rect x="7" y="14" width="1.02" height="1.02"/><rect x="8" y="14" width="1.02" height="1.02"/><rect x="12" y="14" width="1.02" height="1.02"/><rect x="14" y="14" width="1.02" height="1.02"/><rect x="15" y="14" width="1.02" height="1.02"/><rect x="16" y="14" width="1.02" height="1.02"/><rect x="17" y="14" width="1.02" height="1.02"/><rect x="19" y="14" width="1.02" height="1.02"/><rect x="20" y="14" width="1.02" height="1.02"/><rect x="21" y="14" width="1.02" height="1.02"/><rect x="24" y="14" width="1.02" height="1.02"/><rect x="0" y="15" width="1.02" height="1.02"/><rect x="2" y="15" width="1.02" height="1.02"/><rect x="3" y="15" width="1.02" height="1.02"/><rect x="9" y="15" width="1.02" height="1.02"/><rect x="11" y="15" width="1.02" height="1.02"/><rect x="16" y="15" width="1.02" height="1.02"/><rect x="17" y="15" width="1.02" height="1.02"/><rect x="23" y="15" width="1.02" height="1.02"/><rect x="24" y="15" width="1.02" height="1.02"/><rect x="3" y="16" width="1.02" height="1.02"/><rect x="4" y="16" width="1.02" height="1.02"/><rect x="6" y="16" width="1.02" height="1.02"/><rect x="7" y="16" width="1.02" height="1.02"/><rect x="10" y="16" width="1.02" height="1.02"/><rect x="11" y="16" width="1.02" height="1.02"/><rect x="14" y="16" width="1.02" height="1.02"/><rect x="16" y="16" width="1.02" height="1.02"/><rect x="17" y="16" width="1.02" height="1.02"/><rect x="18" y="16" width="1.02" height="1.02"/><rect x="19" y="16" width="1.02" height="1.02"/><rect x="20" y="16" width="1.02" height="1.02"/><rect x="23" y="16" width="1.02" height="1.02"/><rect x="8" y="17" width="1.02" height="1.02"/><rect x="10" y="17" width="1.02" height="1.02"/><rect x="12" y="17" width="1.02" height="1.02"/><rect x="13" y="17" width="1.02" height="1.02"/><rect x="14" y="17" width="1.02" height="1.02"/><rect x="16" y="17" width="1.02" height="1.02"/><rect x="20" y="17" width="1.02" height="1.02"/><rect x="21" y="17" width="1.02" height="1.02"/><rect x="22" y="17" width="1.02" height="1.02"/><rect x="0" y="18" width="1.02" height="1.02"/><rect x="1" y="18" width="1.02" height="1.02"/><rect x="2" y="18" width="1.02" height="1.02"/><rect x="3" y="18" width="1.02" height="1.02"/><rect x="4" y="18" width="1.02" height="1.02"/><rect x="5" y="18" width="1.02" height="1.02"/><rect x="6" y="18" width="1.02" height="1.02"/><rect x="9" y="18" width="1.02" height="1.02"/><rect x="13" y="18" width="1.02" height="1.02"/><rect x="14" y="18" width="1.02" height="1.02"/><rect x="16" y="18" width="1.02" height="1.02"/><rect x="18" y="18" width="1.02" height="1.02"/><rect x="20" y="18" width="1.02" height="1.02"/><rect x="22" y="18" width="1.02" height="1.02"/><rect x="23" y="18" width="1.02" height="1.02"/><rect x="24" y="18" width="1.02" height="1.02"/><rect x="0" y="19" width="1.02" height="1.02"/><rect x="6" y="19" width="1.02" height="1.02"/><rect x="9" y="19" width="1.02" height="1.02"/><rect x="12" y="19" width="1.02" height="1.02"/><rect x="13" y="19" width="1.02" height="1.02"/><rect x="14" y="19" width="1.02" height="1.02"/><rect x="15" y="19" width="1.02" height="1.02"/><rect x="16" y="19" width="1.02" height="1.02"/><rect x="20" y="19" width="1.02" height="1.02"/><rect x="23" y="19" width="1.02" height="1.02"/><rect x="24" y="19" width="1.02" height="1.02"/><rect x="0" y="20" width="1.02" height="1.02"/><rect x="2" y="20" width="1.02" height="1.02"/><rect x="3" y="20" width="1.02" height="1.02"/><rect x="4" y="20" width="1.02" height="1.02"/><rect x="6" y="20" width="1.02" height="1.02"/><rect x="10" y="20" width="1.02" height="1.02"/><rect x="14" y="20" width="1.02" height="1.02"/><rect x="15" y="20" width="1.02" height="1.02"/><rect x="16" y="20" width="1.02" height="1.02"/><rect x="17" y="20" width="1.02" height="1.02"/><rect x="18" y="20" width="1.02" height="1.02"/><rect x="19" y="20" width="1.02" height="1.02"/><rect x="20" y="20" width="1.02" height="1.02"/><rect x="22" y="20" width="1.02" height="1.02"/><rect x="24" y="20" width="1.02" height="1.02"/><rect x="0" y="21" width="1.02" height="1.02"/><rect x="2" y="21" width="1.02" height="1.02"/><rect x="3" y="21" width="1.02" height="1.02"/><rect x="4" y="21" width="1.02" height="1.02"/><rect x="6" y="21" width="1.02" height="1.02"/><rect x="8" y="21" width="1.02" height="1.02"/><rect x="9" y="21" width="1.02" height="1.02"/><rect x="11" y="21" width="1.02" height="1.02"/><rect x="15" y="21" width="1.02" height="1.02"/><rect x="16" y="21" width="1.02" height="1.02"/><rect x="17" y="21" width="1.02" height="1.02"/><rect x="18" y="21" width="1.02" height="1.02"/><rect x="20" y="21" width="1.02" height="1.02"/><rect x="23" y="21" width="1.02" height="1.02"/><rect x="24" y="21" width="1.02" height="1.02"/><rect x="0" y="22" width="1.02" height="1.02"/><rect x="2" y="22" width="1.02" height="1.02"/><rect x="3" y="22" width="1.02" height="1.02"/><rect x="4" y="22" width="1.02" height="1.02"/><rect x="6" y="22" width="1.02" height="1.02"/><rect x="8" y="22" width="1.02" height="1.02"/><rect x="9" y="22" width="1.02" height="1.02"/><rect x="13" y="22" width="1.02" height="1.02"/><rect x="18" y="22" width="1.02" height="1.02"/><rect x="21" y="22" width="1.02" height="1.02"/><rect x="22" y="22" width="1.02" height="1.02"/><rect x="23" y="22" width="1.02" height="1.02"/><rect x="0" y="23" width="1.02" height="1.02"/><rect x="6" y="23" width="1.02" height="1.02"/><rect x="8" y="23" width="1.02" height="1.02"/><rect x="10" y="23" width="1.02" height="1.02"/><rect x="11" y="23" width="1.02" height="1.02"/><rect x="13" y="23" width="1.02" height="1.02"/><rect x="15" y="23" width="1.02" height="1.02"/><rect x="17" y="23" width="1.02" height="1.02"/><rect x="20" y="23" width="1.02" height="1.02"/><rect x="22" y="23" width="1.02" height="1.02"/><rect x="23" y="23" width="1.02" height="1.02"/><rect x="24" y="23" width="1.02" height="1.02"/><rect x="0" y="24" width="1.02" height="1.02"/><rect x="1" y="24" width="1.02" height="1.02"/><rect x="2" y="24" width="1.02" height="1.02"/><rect x="3" y="24" width="1.02" height="1.02"/><rect x="4" y="24" width="1.02" height="1.02"/><rect x="5" y="24" width="1.02" height="1.02"/><rect x="6" y="24" width="1.02" height="1.02"/><rect x="8" y="24" width="1.02" height="1.02"/><rect x="9" y="24" width="1.02" height="1.02"/><rect x="13" y="24" width="1.02" height="1.02"/><rect x="14" y="24" width="1.02" height="1.02"/><rect x="17" y="24" width="1.02" height="1.02"/><rect x="22" y="24" width="1.02" height="1.02"/><rect x="23" y="24" width="1.02" height="1.02"/><rect x="24" y="24" width="1.02" height="1.02"/></g></svg>
<div class="a" style="left:1135px;top:322px;width:393px;height:328px;border:3px solid #7fadf6;border-radius:10px;background:#7fadf6"></div>
<div class="a" style="left:1138px;top:325px;width:387px;height:322px;border-radius:7px;overflow:hidden">
<svg style="left:0;top:0;overflow:hidden" width="387" height="322" viewBox="0 0 387 322">
<defs>
<filter id="b8" x="-50%" y="-50%" width="200%" height="200%"><feGaussianBlur stdDeviation="10"/></filter>
<filter id="b3" x="-50%" y="-50%" width="200%" height="200%"><feGaussianBlur stdDeviation="3"/></filter>
<filter id="b1" x="-50%" y="-50%" width="200%" height="200%"><feGaussianBlur stdDeviation="1"/></filter>
<linearGradient id="wall" x1="0.1" y1="0.95" x2="0.75" y2="0"><stop offset="0" stop-color="#f2eeeb"/><stop offset=".3" stop-color="#e6e2df"/><stop offset=".6" stop-color="#cfd0cd"/><stop offset="1" stop-color="#c5c6c4"/></linearGradient>
</defs>
<rect width="387" height="322" fill="url(#wall)"/>

<!-- left shelf -->
<rect x="0" y="212" width="52" height="10" fill="#e9e6e1" filter="url(#b1)"/>
<rect x="0" y="222" width="50" height="16" fill="#d6d0c8" filter="url(#b1)"/>
<rect x="36" y="212" width="14" height="8" fill="#8f8a86" filter="url(#b1)"/>
<path d="M0 238H48V300H0Z" fill="#e0dbd4" filter="url(#b1)"/>
<!-- chair -->
<path d="M238 118Q262 108 300 135Q345 165 368 190Q376 205 362 220L352 300H240Z" fill="#18181b" filter="url(#b1)"/>
<path d="M100 168Q112 152 128 148L140 160L95 235Z" fill="#1b1b1f" filter="url(#b1)"/>
<!-- arms -->
<path d="M0 268Q30 240 62 222L85 230L92 300H0Z" fill="#cfa387" filter="url(#b1)"/>
<path d="M340 240Q372 262 387 275V322H338Z" fill="#c99d80" filter="url(#b1)"/>
<!-- shirt -->
<path d="M118 148Q140 140 160 148Q190 160 222 148Q255 136 279 137Q330 172 378 236L356 278Q345 285 340 300H88L78 290Q55 260 46 233Q90 170 128 150Z" fill="#1d2236" filter="url(#b1)"/>
<!-- wave print -->
<ellipse cx="165" cy="250" rx="45" ry="42" fill="#8c9aae" filter="url(#b3)"/>
<ellipse cx="155" cy="255" rx="30" ry="30" fill="#c3cbd5" filter="url(#b3)"/>
<ellipse cx="250" cy="222" rx="42" ry="35" fill="#5d6b82" filter="url(#b3)" opacity=".75"/>
<path d="M222 200L232 205M260 205L270 200M240 230L250 226M275 240L282 232M215 248L222 240" stroke="#dde3ea" stroke-width="2.5"/>
<!-- neck / face -->
<path d="M160 122Q166 152 190 152Q215 150 225 122Z" fill="#c09a84"/>
<path d="M150 70Q149 125 168 136Q185 144 205 141Q233 132 238 95Q238 60 230 55H155Z" fill="#d4b19d" filter="url(#b1)"/>
<!-- hair -->
<path d="M146 90Q140 35 185 25Q232 20 246 55Q250 85 240 110Q236 72 220 62Q190 55 158 68Q150 80 150 100Z" fill="#141414" filter="url(#b1)"/>
<!-- headset -->
<path d="M148 92Q146 35 192 28Q240 28 246 92" fill="none" stroke="#3a3a3a" stroke-width="2.5"/>
<rect x="140" y="78" width="13" height="40" rx="6" fill="#262626"/>
<rect x="228" y="86" width="23" height="34" rx="10" fill="#2e2e2e"/>
<rect x="232" y="90" width="15" height="26" rx="7" fill="#777"/>
<path d="M232 118Q220 128 200 136" stroke="#1e1e1e" stroke-width="4"/>
<!-- glasses -->
<ellipse cx="172" cy="103" rx="12" ry="10" fill="none" stroke="#6d5a55" stroke-width="1.2"/>
<ellipse cx="205" cy="103" rx="12" ry="10" fill="none" stroke="#6d5a55" stroke-width="1.2"/>
<!-- red cable -->
<path d="M240 122Q242 190 222 250Q205 292 185 322" stroke="#b0444b" stroke-width="1.4" fill="none"/>
<!-- desk -->
<path d="M0 292Q200 290 387 296V322H0Z" fill="#b8a592" filter="url(#b1)"/>
<path d="M0 312Q200 306 387 314" stroke="#c64940" stroke-width="2" fill="none"/>
</svg>
</div>
<div class="a" style="left:1489px;top:334px;width:26px;height:26px;border-radius:50%;background:#1a73e8"></div>
<div class="a" style="left:1494.5px;top:344px;width:3.5px;height:6px;background:#fff;border-radius:2px"></div>
<div class="a" style="left:1500.2px;top:342px;width:3.5px;height:10px;background:#fff;border-radius:2px"></div>
<div class="a" style="left:1506px;top:344px;width:3.5px;height:6px;background:#fff;border-radius:2px"></div>
<svg style="left:1148px;top:620px;" width="14" height="20" viewBox="0 0 14 20"><path d="M2 1.5H12M3.5 1.5V8.5L1 11.5H13L10.5 8.5V1.5" fill="#fff" stroke="#fff" stroke-width="1.6" stroke-linejoin="round"/><path d="M7 11.5V19" stroke="#fff" stroke-width="1.8"/></svg>
<div class="a" style="left:1183.00px;top:623.30px;font-size:15px;line-height:15px;color:#fff;font-weight:bold;white-space:nowrap;transform:scaleX(0.9206);transform-origin:0 0;text-shadow:0 0 2px rgba(0,0,0,.5)">ecashflow Kevin Huang</div>
<div class="a" style="left:0;top:0;width:1920px;height:1080px;clip-path:inset(103px 16px 120px 1544px round 8px)">
<div class="a" style="left:1544px;top:103px;width:360px;height:857px;background:#fff;border-radius:8px;overflow:hidden"></div>
<div class="a" style="left:1569.50px;top:126.42px;font-size:19px;line-height:19px;color:#1f1f1f;white-space:nowrap;transform:scaleX(0.9127);transform-origin:0 0;">People</div>
<svg style="left:1863px;top:129px;" width="15" height="15" viewBox="0 0 15 15"><path d="M1 1L14 14M14 1L1 14" stroke="#444746" stroke-width="2"/></svg>
<div class="a" style="left:1555px;top:168px;width:329px;height:47.5px;border:1px solid #dadce0;border-radius:8px"></div>
<svg style="left:1574px;top:183px;" width="18" height="18" viewBox="0 0 18 18"><circle cx="7" cy="7" r="5.3" fill="none" stroke="#444746" stroke-width="2.2"/><path d="M11 11L17 17" stroke="#444746" stroke-width="2.6"/></svg>
<div class="a" style="left:1603.00px;top:184.78px;font-size:16.8px;line-height:16.8px;color:#5f6368;white-space:nowrap;transform:scaleX(0.9501);transform-origin:0 0;">Search for people</div>
<div class="a" style="left:1569.00px;top:242.27px;font-size:11.5px;line-height:11.5px;color:#5f6368;font-weight:bold;white-space:nowrap;transform:scaleX(0.9069);transform-origin:0 0;letter-spacing:0.9px;">IN MEETING</div>
<div class="a" style="left:1555px;top:265.5px;width:329px;height:720px;border:1px solid #dadce0;border-radius:8px 8px 0 0"></div>
<div class="a" style="left:1556px;top:306px;width:328px;height:1px;background:#dadce0"></div>
<div class="a" style="left:1576.00px;top:278.80px;font-size:15px;line-height:15px;color:#1f1f1f;white-space:nowrap;transform:scaleX(1.0036);transform-origin:0 0;">Contributors</div>
<div class="a" style="left:1802.50px;top:278.80px;font-size:15px;line-height:15px;color:#1f1f1f;white-space:nowrap;transform:scaleX(0.7791);transform-origin:0 0;">19</div>
<svg style="left:1849px;top:281px;" width="15" height="10" viewBox="0 0 15 10"><path d="M1.5 8.5L7.5 2.5L13.5 8.5" stroke="#1f1f1f" stroke-width="2" fill="none"/></svg>
<svg style="left:1576px;top:327px;border-radius:50%" width="32" height="32" viewBox="0 0 48 48"><defs><clipPath id="av1"><circle cx="24" cy="24" r="24"/></clipPath></defs><g clip-path="url(#av1)"><rect width="48" height="48" fill="#1a9ddb"/><path d="M4 48Q6 34 18 32H30Q42 34 44 48Z" fill="#b8443a"/><rect x="20" y="27" width="8" height="7" fill="#c9a48c"/><ellipse cx="24" cy="21" rx="8" ry="10" fill="#c9a48c"/><path d="M15.5 20Q15 10 24 10Q33 10 32.5 20Q31 14 24 14Q17 14 15.5 20Z" fill="#1a1a1a"/><path d="M16 22Q17 34 24 34Q31 34 32 22Q30 28 24 28Q18 28 16 22Z" fill="#1a1a1a"/></g></svg>
<div class="a" style="left:1624.00px;top:335.73px;font-size:14.5px;line-height:14.5px;color:#3c4043;white-space:nowrap;transform:scaleX(0.9548);transform-origin:0 0;">ashraf maniyar (You)</div>
<svg style="left:1796px;top:332px;" width="23" height="23" viewBox="0 0 24 24"><path d="M9.6 9V6A2.4 2.4 0 0 1 14.4 6V13" fill="none" stroke="#444746" stroke-width="1.9"/><path d="M7 11.5A5 5 0 0 0 14.5 16.3M17 11.5Q17 13.2 16.2 14.5M12 17V21" fill="none" stroke="#444746" stroke-width="1.9"/><path d="M2.5 2.8L21 21.2" stroke="#444746" stroke-width="2"/></svg>
<div class="a" style="left:1854px;top:335px;width:4px;height:4px;border-radius:50%;background:#444746"></div>
<div class="a" style="left:1854px;top:341px;width:4px;height:4px;border-radius:50%;background:#444746"></div>
<div class="a" style="left:1854px;top:347px;width:4px;height:4px;border-radius:50%;background:#444746"></div>
<svg style="left:1576px;top:383px;border-radius:50%" width="32" height="32" viewBox="0 0 48 48"><defs><clipPath id="av2"><circle cx="24" cy="24" r="24"/></clipPath></defs><g clip-path="url(#av2)"><rect width="48" height="48" fill="#a9cbe8"/><rect y="30" width="48" height="18" fill="#6b6a62"/><path d="M20 48Q22 30 32 26Q42 28 46 48Z" fill="#222226"/><ellipse cx="31" cy="19" rx="6" ry="7.5" fill="#8a6a55"/><path d="M25 17Q25 9 31 9Q37 9 37 17Q34 13 31 13Q28 13 25 17Z" fill="#1a1a1a"/></g></svg>
<div class="a" style="left:1624.00px;top:391.73px;font-size:14.5px;line-height:14.5px;color:#3c4043;white-space:nowrap;transform:scaleX(0.9074);transform-origin:0 0;">ASHRAF MANIYAR</div>
<svg style="left:1796px;top:388px;" width="23" height="23" viewBox="0 0 24 24"><path d="M9.6 9V6A2.4 2.4 0 0 1 14.4 6V13" fill="none" stroke="#444746" stroke-width="1.9"/><path d="M7 11.5A5 5 0 0 0 14.5 16.3M17 11.5Q17 13.2 16.2 14.5M12 17V21" fill="none" stroke="#444746" stroke-width="1.9"/><path d="M2.5 2.8L21 21.2" stroke="#444746" stroke-width="2"/></svg>
<div class="a" style="left:1854px;top:391px;width:4px;height:4px;border-radius:50%;background:#444746"></div>
<div class="a" style="left:1854px;top:397px;width:4px;height:4px;border-radius:50%;background:#444746"></div>
<div class="a" style="left:1854px;top:403px;width:4px;height:4px;border-radius:50%;background:#444746"></div>
<div class="a" style="left:1576px;top:439px;width:32px;height:32px;border-radius:50%;background:#01579b"></div>
<div class="a" style="left:1584.78px;top:445.07px;font-size:20px;line-height:20px;color:#fff;white-space:nowrap;">D</div>
<div class="a" style="left:1624.00px;top:447.73px;font-size:14.5px;line-height:14.5px;color:#3c4043;white-space:nowrap;transform:scaleX(0.9113);transform-origin:0 0;">Dinesh Singh_516</div>
<svg style="left:1796px;top:444px;" width="23" height="23" viewBox="0 0 24 24"><path d="M9.6 9V6A2.4 2.4 0 0 1 14.4 6V13" fill="none" stroke="#444746" stroke-width="1.9"/><path d="M7 11.5A5 5 0 0 0 14.5 16.3M17 11.5Q17 13.2 16.2 14.5M12 17V21" fill="none" stroke="#444746" stroke-width="1.9"/><path d="M2.5 2.8L21 21.2" stroke="#444746" stroke-width="2"/></svg>
<div class="a" style="left:1854px;top:447px;width:4px;height:4px;border-radius:50%;background:#444746"></div>
<div class="a" style="left:1854px;top:453px;width:4px;height:4px;border-radius:50%;background:#444746"></div>
<div class="a" style="left:1854px;top:459px;width:4px;height:4px;border-radius:50%;background:#444746"></div>
<div class="a" style="left:1576px;top:495px;width:32px;height:32px;border-radius:50%;background:#ab47bc"></div>
<div class="a" style="left:1586.44px;top:501.07px;font-size:20px;line-height:20px;color:#fff;white-space:nowrap;">e</div>
<div class="a" style="left:1595px;top:514px;width:16px;height:16px;border-radius:50%;background:#fff"></div>
<svg style="left:1598px;top:515px;" width="10" height="13" viewBox="0 0 10 13"><path d="M2 1H8M3 1V6L1 8H9L7 6V1M5 8V13" stroke="#1f1f1f" stroke-width="1.4" fill="#1f1f1f"/></svg>
<div class="a" style="left:1624.00px;top:503.73px;font-size:14.5px;line-height:14.5px;color:#3c4043;white-space:nowrap;transform:scaleX(0.9635);transform-origin:0 0;">ecashflow Kevin Huang</div>
<div class="a" style="left:1795px;top:499px;width:24px;height:24px;border-radius:50%;background:#1a73e8"></div>
<div class="a" style="left:1799.5px;top:508px;width:3.5px;height:6px;background:#fff;border-radius:2px"></div>
<div class="a" style="left:1805.2px;top:506px;width:3.5px;height:10px;background:#fff;border-radius:2px"></div>
<div class="a" style="left:1811px;top:508px;width:3.5px;height:6px;background:#fff;border-radius:2px"></div>
<div class="a" style="left:1854px;top:503px;width:4px;height:4px;border-radius:50%;background:#444746"></div>
<div class="a" style="left:1854px;top:509px;width:4px;height:4px;border-radius:50%;background:#444746"></div>
<div class="a" style="left:1854px;top:515px;width:4px;height:4px;border-radius:50%;background:#444746"></div>
<div class="a" style="left:1576px;top:551px;width:32px;height:32px;border-radius:50%;background:#ab47bc"></div>
<div class="a" style="left:1586.44px;top:557.07px;font-size:20px;line-height:20px;color:#fff;white-space:nowrap;">e</div>
<div class="a" style="left:1595px;top:570px;width:16px;height:16px;border-radius:50%;background:#fff"></div>
<svg style="left:1598px;top:571px;" width="10" height="13" viewBox="0 0 10 13"><path d="M2 1H8M3 1V6L1 8H9L7 6V1M5 8V13" stroke="#1f1f1f" stroke-width="1.4" fill="#1f1f1f"/></svg>
<div class="a" style="left:1624.00px;top:570.42px;font-size:12.5px;line-height:12.5px;color:#5f6368;white-space:nowrap;transform:scaleX(0.9831);transform-origin:0 0;">Presentation</div>
<div class="a" style="left:1624.00px;top:552.73px;font-size:14.5px;line-height:14.5px;color:#3c4043;white-space:nowrap;transform:scaleX(0.9635);transform-origin:0 0;">ecashflow Kevin Huang</div>
<svg style="left:1796px;top:556px;" width="23" height="23" viewBox="0 0 24 24"><path d="M3 9v6h4l5 5V4L7 9H3z" fill="#444746"/><path d="M16.5 12A4.5 4.5 0 0 0 14 8v8a4.5 4.5 0 0 0 2.5-4z" fill="#444746"/><path d="M2 2L21 21" stroke="#fff" stroke-width="3"/><path d="M2.5 2.5L20.5 20.5" stroke="#444746" stroke-width="1.8"/></svg>
<div class="a" style="left:1854px;top:559px;width:4px;height:4px;border-radius:50%;background:#444746"></div>
<div class="a" style="left:1854px;top:565px;width:4px;height:4px;border-radius:50%;background:#444746"></div>
<div class="a" style="left:1854px;top:571px;width:4px;height:4px;border-radius:50%;background:#444746"></div>
<svg style="left:1576px;top:607px;border-radius:50%" width="32" height="32" viewBox="0 0 48 48"><defs><clipPath id="av3"><circle cx="24" cy="24" r="24"/></clipPath></defs><g clip-path="url(#av3)"><rect width="48" height="48" fill="#f2f2f2"/><path d="M4 48Q6 34 18 32H30Q42 34 44 48Z" fill="#1f2f78"/><rect x="20" y="27" width="8" height="7" fill="#8c5c3e"/><ellipse cx="24" cy="21" rx="8" ry="10" fill="#8c5c3e"/><path d="M15.5 20Q15 10 24 10Q33 10 32.5 20Q31 14 24 14Q17 14 15.5 20Z" fill="#141414"/></g></svg>
<div class="a" style="left:1624.00px;top:615.73px;font-size:14.5px;line-height:14.5px;color:#3c4043;white-space:nowrap;transform:scaleX(0.9663);transform-origin:0 0;">Jagannath Gadanga</div>
<svg style="left:1796px;top:612px;" width="23" height="23" viewBox="0 0 24 24"><path d="M9.6 9V6A2.4 2.4 0 0 1 14.4 6V13" fill="none" stroke="#444746" stroke-width="1.9"/><path d="M7 11.5A5 5 0 0 0 14.5 16.3M17 11.5Q17 13.2 16.2 14.5M12 17V21" fill="none" stroke="#444746" stroke-width="1.9"/><path d="M2.5 2.8L21 21.2" stroke="#444746" stroke-width="2"/></svg>
<div class="a" style="left:1854px;top:615px;width:4px;height:4px;border-radius:50%;background:#444746"></div>
<div class="a" style="left:1854px;top:621px;width:4px;height:4px;border-radius:50%;background:#444746"></div>
<div class="a" style="left:1854px;top:627px;width:4px;height:4px;border-radius:50%;background:#444746"></div>
<svg style="left:1576px;top:663px;border-radius:50%" width="32" height="32" viewBox="0 0 48 48"><defs><clipPath id="av4"><circle cx="24" cy="24" r="24"/></clipPath></defs><g clip-path="url(#av4)"><rect width="48" height="48" fill="#b9a68c"/><path d="M4 48Q6 34 18 32H30Q42 34 44 48Z" fill="#34506c"/><rect x="20" y="27" width="8" height="7" fill="#a66d4c"/><ellipse cx="24" cy="21" rx="8" ry="10" fill="#a66d4c"/><path d="M15.5 20Q15 10 24 10Q33 10 32.5 20Q31 14 24 14Q17 14 15.5 20Z" fill="#1c1815"/></g></svg>
<div class="a" style="left:1624.00px;top:671.73px;font-size:14.5px;line-height:14.5px;color:#3c4043;white-space:nowrap;transform:scaleX(0.9473);transform-origin:0 0;">Madan Kumar Jha 20-3...</div>
<svg style="left:1796px;top:668px;" width="23" height="23" viewBox="0 0 24 24"><path d="M9.6 9V6A2.4 2.4 0 0 1 14.4 6V13" fill="none" stroke="#444746" stroke-width="1.9"/><path d="M7 11.5A5 5 0 0 0 14.5 16.3M17 11.5Q17 13.2 16.2 14.5M12 17V21" fill="none" stroke="#444746" stroke-width="1.9"/><path d="M2.5 2.8L21 21.2" stroke="#444746" stroke-width="2"/></svg>
<div class="a" style="left:1854px;top:671px;width:4px;height:4px;border-radius:50%;background:#444746"></div>
<div class="a" style="left:1854px;top:677px;width:4px;height:4px;border-radius:50%;background:#444746"></div>
<div class="a" style="left:1854px;top:683px;width:4px;height:4px;border-radius:50%;background:#444746"></div>
<div class="a" style="left:1576px;top:719px;width:32px;height:32px;border-radius:50%;background:#7b1fa2"></div>
<div class="a" style="left:1584.78px;top:725.07px;font-size:20px;line-height:20px;color:#fff;white-space:nowrap;">N</div>
<div class="a" style="left:1624.00px;top:727.73px;font-size:14.5px;line-height:14.5px;color:#3c4043;white-space:nowrap;transform:scaleX(0.9581);transform-origin:0 0;">Nitish Jha</div>
<svg style="left:1796px;top:724px;" width="23" height="23" viewBox="0 0 24 24"><path d="M9.6 9V6A2.4 2.4 0 0 1 14.4 6V13" fill="none" stroke="#444746" stroke-width="1.9"/><path d="M7 11.5A5 5 0 0 0 14.5 16.3M17 11.5Q17 13.2 16.2 14.5M12 17V21" fill="none" stroke="#444746" stroke-width="1.9"/><path d="M2.5 2.8L21 21.2" stroke="#444746" stroke-width="2"/></svg>
<div class="a" style="left:1854px;top:727px;width:4px;height:4px;border-radius:50%;background:#444746"></div>
<div class="a" style="left:1854px;top:733px;width:4px;height:4px;border-radius:50%;background:#444746"></div>
<div class="a" style="left:1854px;top:739px;width:4px;height:4px;border-radius:50%;background:#444746"></div>
<svg style="left:1576px;top:775px;border-radius:50%" width="32" height="32" viewBox="0 0 48 48"><defs><clipPath id="av5"><circle cx="24" cy="24" r="24"/></clipPath></defs><g clip-path="url(#av5)"><rect width="48" height="48" fill="#5d7188"/><rect width="48" height="12" fill="#d9cfae"/><rect x="4" y="14" width="5" height="14" fill="#c0392b"/><rect x="38" y="14" width="5" height="14" fill="#e0c050"/><rect x="10" y="16" width="4" height="12" fill="#e8e8e8"/><path d="M4 48Q6 34 18 32H30Q42 34 44 48Z" fill="#1d2e55"/><rect x="20" y="27" width="8" height="7" fill="#9c6c55"/><ellipse cx="24" cy="21" rx="8" ry="10" fill="#9c6c55"/><path d="M15.5 20Q15 10 24 10Q33 10 32.5 20Q31 14 24 14Q17 14 15.5 20Z" fill="#1a1a1a"/></g></svg>
<div class="a" style="left:1624.00px;top:783.73px;font-size:14.5px;line-height:14.5px;color:#3c4043;white-space:nowrap;transform:scaleX(0.9090);transform-origin:0 0;">P K Tiwari IIT Patna</div>
<svg style="left:1796px;top:780px;" width="23" height="23" viewBox="0 0 24 24"><path d="M9.6 9V6A2.4 2.4 0 0 1 14.4 6V13" fill="none" stroke="#444746" stroke-width="1.9"/><path d="M7 11.5A5 5 0 0 0 14.5 16.3M17 11.5Q17 13.2 16.2 14.5M12 17V21" fill="none" stroke="#444746" stroke-width="1.9"/><path d="M2.5 2.8L21 21.2" stroke="#444746" stroke-width="2"/></svg>
<div class="a" style="left:1854px;top:783px;width:4px;height:4px;border-radius:50%;background:#444746"></div>
<div class="a" style="left:1854px;top:789px;width:4px;height:4px;border-radius:50%;background:#444746"></div>
<div class="a" style="left:1854px;top:795px;width:4px;height:4px;border-radius:50%;background:#444746"></div>
<div class="a" style="left:1576px;top:831px;width:32px;height:32px;border-radius:50%;background:#004d40"></div>
<div class="a" style="left:1585.33px;top:837.07px;font-size:20px;line-height:20px;color:#fff;white-space:nowrap;">P</div>
<div class="a" style="left:1624.00px;top:839.73px;font-size:14.5px;line-height:14.5px;color:#3c4043;white-space:nowrap;transform:scaleX(0.9454);transform-origin:0 0;">Prity sinha</div>
<svg style="left:1796px;top:836px;" width="23" height="23" viewBox="0 0 24 24"><path d="M9.6 9V6A2.4 2.4 0 0 1 14.4 6V13" fill="none" stroke="#444746" stroke-width="1.9"/><path d="M7 11.5A5 5 0 0 0 14.5 16.3M17 11.5Q17 13.2 16.2 14.5M12 17V21" fill="none" stroke="#444746" stroke-width="1.9"/><path d="M2.5 2.8L21 21.2" stroke="#444746" stroke-width="2"/></svg>
<div class="a" style="left:1854px;top:839px;width:4px;height:4px;border-radius:50%;background:#444746"></div>
<div class="a" style="left:1854px;top:845px;width:4px;height:4px;border-radius:50%;background:#444746"></div>
<div class="a" style="left:1854px;top:851px;width:4px;height:4px;border-radius:50%;background:#444746"></div>
<div class="a" style="left:1576px;top:887px;width:32px;height:32px;border-radius:50%;background:#ab47bc"></div>
<div class="a" style="left:1585.33px;top:893.07px;font-size:20px;line-height:20px;color:#fff;white-space:nowrap;">P</div>
<div class="a" style="left:1624.00px;top:895.73px;font-size:14.5px;line-height:14.5px;color:#3c4043;white-space:nowrap;transform:scaleX(0.9369);transform-origin:0 0;">Puja Kumari</div>
<svg style="left:1796px;top:892px;" width="23" height="23" viewBox="0 0 24 24"><path d="M9.6 9V6A2.4 2.4 0 0 1 14.4 6V13" fill="none" stroke="#444746" stroke-width="1.9"/><path d="M7 11.5A5 5 0 0 0 14.5 16.3M17 11.5Q17 13.2 16.2 14.5M12 17V21" fill="none" stroke="#444746" stroke-width="1.9"/><path d="M2.5 2.8L21 21.2" stroke="#444746" stroke-width="2"/></svg>
<div class="a" style="left:1854px;top:895px;width:4px;height:4px;border-radius:50%;background:#444746"></div>
<div class="a" style="left:1854px;top:901px;width:4px;height:4px;border-radius:50%;background:#444746"></div>
<div class="a" style="left:1854px;top:907px;width:4px;height:4px;border-radius:50%;background:#444746"></div>
<svg style="left:1576px;top:943px;border-radius:50%" width="32" height="32" viewBox="0 0 48 48"><defs><clipPath id="av6"><circle cx="24" cy="24" r="24"/></clipPath></defs><g clip-path="url(#av6)"><rect width="48" height="48" fill="#ebe7d3"/><path d="M4 48Q6 34 18 32H30Q42 34 44 48Z" fill="#d8d3bd"/><rect x="20" y="27" width="8" height="7" fill="#b58563"/><ellipse cx="24" cy="21" rx="8" ry="10" fill="#b58563"/><path d="M15.5 20Q15 10 24 10Q33 10 32.5 20Q31 14 24 14Q17 14 15.5 20Z" fill="#1c1815"/><path d="M16 20H32" stroke="#444" stroke-width="1"/><path d="M12 48L16 34M36 48L32 34" stroke="#5a4a3a" stroke-width="2.5"/></g></svg>
<div class="a" style="left:1624.00px;top:951.73px;font-size:14.5px;line-height:14.5px;color:#3c4043;white-space:nowrap;transform:scaleX(0.9555);transform-origin:0 0;">pushp raj</div>
<svg style="left:1796px;top:948px;" width="23" height="23" viewBox="0 0 24 24"><path d="M9.6 9V6A2.4 2.4 0 0 1 14.4 6V13" fill="none" stroke="#444746" stroke-width="1.9"/><path d="M7 11.5A5 5 0 0 0 14.5 16.3M17 11.5Q17 13.2 16.2 14.5M12 17V21" fill="none" stroke="#444746" stroke-width="1.9"/><path d="M2.5 2.8L21 21.2" stroke="#444746" stroke-width="2"/></svg>
<div class="a" style="left:1854px;top:951px;width:4px;height:4px;border-radius:50%;background:#444746"></div>
<div class="a" style="left:1854px;top:957px;width:4px;height:4px;border-radius:50%;background:#444746"></div>
<div class="a" style="left:1854px;top:963px;width:4px;height:4px;border-radius:50%;background:#444746"></div>
<div class="a" style="left:1895px;top:171px;width:8px;height:504px;background:#bdc1c6;border-radius:4px"></div>
</div>
<div class="a" style="left:16px;top:829px;width:157px;height:131px;background:#3c4043;border-radius:8px"></div>
<div class="a" style="left:136px;top:841px;width:26px;height:26px;border-radius:50%;background:#333639"></div>
<svg style="left:140px;top:845px;" width="18" height="18" viewBox="0 0 24 24"><path d="M12 14c1.66 0 3-1.34 3-3V5c0-1.66-1.34-3-3-3S9 3.34 9 5v6c0 1.66 1.34 3 3 3z" fill="#f1f3f4"/><path d="M17 11c0 2.76-2.24 5-5 5s-5-2.24-5-5H5c0 3.53 2.61 6.43 6 6.92V21h2v-3.08c3.39-.49 6-3.39 6-6.92h-2z" fill="#f1f3f4"/><path d="M3.5 3.5L20.5 20.5" stroke="#333639" stroke-width="3.2"/><path d="M3.5 3.5L20.5 20.5" stroke="#f1f3f4" stroke-width="1.8"/></svg>
<div class="a" style="left:71px;top:870px;width:48px;height:48px;border-radius:50%;background:#7b1fa2"></div>
<div class="a" style="left:84.89px;top:881.30px;font-size:28px;line-height:28px;color:#fff;white-space:nowrap;">N</div>
<div class="a" style="left:32.00px;top:931.30px;font-size:15px;line-height:15px;color:#fff;font-weight:bold;white-space:nowrap;transform:scaleX(0.9068);transform-origin:0 0;">Nitish Jha</div>
<div class="a" style="left:186px;top:829px;width:157px;height:131px;background:#3c4043;border-radius:8px"></div>
<div class="a" style="left:306px;top:841px;width:26px;height:26px;border-radius:50%;background:#333639"></div>
<svg style="left:310px;top:845px;" width="18" height="18" viewBox="0 0 24 24"><path d="M12 14c1.66 0 3-1.34 3-3V5c0-1.66-1.34-3-3-3S9 3.34 9 5v6c0 1.66 1.34 3 3 3z" fill="#f1f3f4"/><path d="M17 11c0 2.76-2.24 5-5 5s-5-2.24-5-5H5c0 3.53 2.61 6.43 6 6.92V21h2v-3.08c3.39-.49 6-3.39 6-6.92h-2z" fill="#f1f3f4"/><path d="M3.5 3.5L20.5 20.5" stroke="#333639" stroke-width="3.2"/><path d="M3.5 3.5L20.5 20.5" stroke="#f1f3f4" stroke-width="1.8"/></svg>
<div class="a" style="left:241px;top:870px;width:48px;height:48px;border-radius:50%;background:#78909c"></div>
<div class="a" style="left:255.66px;top:881.30px;font-size:28px;line-height:28px;color:#fff;white-space:nowrap;">P</div>
<div class="a" style="left:202.00px;top:931.30px;font-size:15px;line-height:15px;color:#fff;font-weight:bold;white-space:nowrap;transform:scaleX(0.8998);transform-origin:0 0;">Pushp Raj</div>
<div class="a" style="left:355px;top:829px;width:157px;height:131px;background:#3c4043;border-radius:8px"></div>
<div class="a" style="left:475px;top:841px;width:26px;height:26px;border-radius:50%;background:#333639"></div>
<svg style="left:479px;top:845px;" width="18" height="18" viewBox="0 0 24 24"><path d="M12 14c1.66 0 3-1.34 3-3V5c0-1.66-1.34-3-3-3S9 3.34 9 5v6c0 1.66 1.34 3 3 3z" fill="#f1f3f4"/><path d="M17 11c0 2.76-2.24 5-5 5s-5-2.24-5-5H5c0 3.53 2.61 6.43 6 6.92V21h2v-3.08c3.39-.49 6-3.39 6-6.92h-2z" fill="#f1f3f4"/><path d="M3.5 3.5L20.5 20.5" stroke="#333639" stroke-width="3.2"/><path d="M3.5 3.5L20.5 20.5" stroke="#f1f3f4" stroke-width="1.8"/></svg>
<svg style="left:410px;top:870px;border-radius:50%" width="48" height="48" viewBox="0 0 48 48"><defs><clipPath id="av7"><circle cx="24" cy="24" r="24"/></clipPath></defs><g clip-path="url(#av7)"><rect width="48" height="48" fill="#5d7188"/><rect width="48" height="12" fill="#d9cfae"/><rect x="4" y="14" width="5" height="14" fill="#c0392b"/><rect x="38" y="14" width="5" height="14" fill="#e0c050"/><rect x="10" y="16" width="4" height="12" fill="#e8e8e8"/><path d="M4 48Q6 34 18 32H30Q42 34 44 48Z" fill="#1d2e55"/><rect x="20" y="27" width="8" height="7" fill="#9c6c55"/><ellipse cx="24" cy="21" rx="8" ry="10" fill="#9c6c55"/><path d="M15.5 20Q15 10 24 10Q33 10 32.5 20Q31 14 24 14Q17 14 15.5 20Z" fill="#1a1a1a"/></g></svg>
<div class="a" style="left:371.00px;top:931.30px;font-size:15px;line-height:15px;color:#fff;font-weight:bold;white-space:nowrap;transform:scaleX(0.9053);transform-origin:0 0;">P K Tiwari IIT Pat...</div>
<div class="a" style="left:524px;top:829px;width:157px;height:131px;background:#3c4043;border-radius:8px"></div>
<div class="a" style="left:644px;top:841px;width:26px;height:26px;border-radius:50%;background:#333639"></div>
<svg style="left:648px;top:845px;" width="18" height="18" viewBox="0 0 24 24"><path d="M12 14c1.66 0 3-1.34 3-3V5c0-1.66-1.34-3-3-3S9 3.34 9 5v6c0 1.66 1.34 3 3 3z" fill="#f1f3f4"/><path d="M17 11c0 2.76-2.24 5-5 5s-5-2.24-5-5H5c0 3.53 2.61 6.43 6 6.92V21h2v-3.08c3.39-.49 6-3.39 6-6.92h-2z" fill="#f1f3f4"/><path d="M3.5 3.5L20.5 20.5" stroke="#333639" stroke-width="3.2"/><path d="M3.5 3.5L20.5 20.5" stroke="#f1f3f4" stroke-width="1.8"/></svg>
<div class="a" style="left:579px;top:870px;width:48px;height:48px;border-radius:50%;background:#004d40"></div>
<div class="a" style="left:593.66px;top:881.30px;font-size:28px;line-height:28px;color:#fff;white-space:nowrap;">P</div>
<div class="a" style="left:540.00px;top:931.30px;font-size:15px;line-height:15px;color:#fff;font-weight:bold;white-space:nowrap;transform:scaleX(0.9127);transform-origin:0 0;">Prity sinha</div>
<div class="a" style="left:694px;top:829px;width:157px;height:131px;background:#3c4043;border-radius:8px"></div>
<div class="a" style="left:814px;top:841px;width:26px;height:26px;border-radius:50%;background:#333639"></div>
<svg style="left:818px;top:845px;" width="18" height="18" viewBox="0 0 24 24"><path d="M12 14c1.66 0 3-1.34 3-3V5c0-1.66-1.34-3-3-3S9 3.34 9 5v6c0 1.66 1.34 3 3 3z" fill="#f1f3f4"/><path d="M17 11c0 2.76-2.24 5-5 5s-5-2.24-5-5H5c0 3.53 2.61 6.43 6 6.92V21h2v-3.08c3.39-.49 6-3.39 6-6.92h-2z" fill="#f1f3f4"/><path d="M3.5 3.5L20.5 20.5" stroke="#333639" stroke-width="3.2"/><path d="M3.5 3.5L20.5 20.5" stroke="#f1f3f4" stroke-width="1.8"/></svg>
<svg style="left:749px;top:870px;border-radius:50%" width="48" height="48" viewBox="0 0 48 48"><defs><clipPath id="av8"><circle cx="24" cy="24" r="24"/></clipPath></defs><g clip-path="url(#av8)"><rect width="48" height="48" fill="#fafafa"/><path d="M4 48Q6 34 18 32H30Q42 34 44 48Z" fill="#9c9e9a"/><rect x="20" y="27" width="8" height="7" fill="#a36e4e"/><ellipse cx="24" cy="21" rx="8" ry="10" fill="#a36e4e"/><path d="M15.5 20Q15 10 24 10Q33 10 32.5 20Q31 14 24 14Q17 14 15.5 20Z" fill="#141414"/></g></svg>
<div class="a" style="left:710.00px;top:931.30px;font-size:15px;line-height:15px;color:#fff;font-weight:bold;white-space:nowrap;transform:scaleX(0.9020);transform-origin:0 0;">SHUBHAM KUM...</div>
<div class="a" style="left:863px;top:829px;width:157px;height:131px;background:#3c4043;border-radius:8px"></div>
<div class="a" style="left:983px;top:841px;width:26px;height:26px;border-radius:50%;background:#333639"></div>
<svg style="left:987px;top:845px;" width="18" height="18" viewBox="0 0 24 24"><path d="M12 14c1.66 0 3-1.34 3-3V5c0-1.66-1.34-3-3-3S9 3.34 9 5v6c0 1.66 1.34 3 3 3z" fill="#f1f3f4"/><path d="M17 11c0 2.76-2.24 5-5 5s-5-2.24-5-5H5c0 3.53 2.61 6.43 6 6.92V21h2v-3.08c3.39-.49 6-3.39 6-6.92h-2z" fill="#f1f3f4"/><path d="M3.5 3.5L20.5 20.5" stroke="#333639" stroke-width="3.2"/><path d="M3.5 3.5L20.5 20.5" stroke="#f1f3f4" stroke-width="1.8"/></svg>
<svg style="left:918px;top:870px;border-radius:50%" width="48" height="48" viewBox="0 0 48 48"><defs><clipPath id="av9"><circle cx="24" cy="24" r="24"/></clipPath></defs><g clip-path="url(#av9)"><rect width="48" height="48" fill="#f2f2f2"/><path d="M4 48Q6 34 18 32H30Q42 34 44 48Z" fill="#1f2f78"/><rect x="20" y="27" width="8" height="7" fill="#8c5c3e"/><ellipse cx="24" cy="21" rx="8" ry="10" fill="#8c5c3e"/><path d="M15.5 20Q15 10 24 10Q33 10 32.5 20Q31 14 24 14Q17 14 15.5 20Z" fill="#141414"/></g></svg>
<div class="a" style="left:879.00px;top:931.30px;font-size:15px;line-height:15px;color:#fff;font-weight:bold;white-space:nowrap;transform:scaleX(0.9288);transform-origin:0 0;">Jagannath Gada...</div>
<div class="a" style="left:1033px;top:829px;width:157px;height:131px;background:#3c4043;border-radius:8px"></div>
<svg style="left:1088px;top:870px;border-radius:50%" width="48" height="48" viewBox="0 0 48 48"><defs><clipPath id="av10"><circle cx="24" cy="24" r="24"/></clipPath></defs><g clip-path="url(#av10)"><rect width="48" height="48" fill="#e6e4de"/><path d="M4 48Q6 34 18 32H30Q42 34 44 48Z" fill="#1f4d5e"/><rect x="20" y="27" width="8" height="7" fill="#b58566"/><ellipse cx="24" cy="21" rx="8" ry="10" fill="#b58566"/><path d="M15.5 20Q15 10 24 10Q33 10 32.5 20Q31 14 24 14Q17 14 15.5 20Z" fill="#231c18"/><path d="M16 22Q17 34 24 34Q31 34 32 22Q30 28 24 28Q18 28 16 22Z" fill="#231c18"/></g></svg>
<div class="a" style="left:1049.00px;top:931.30px;font-size:15px;line-height:15px;color:#fff;font-weight:bold;white-space:nowrap;transform:scaleX(0.9140);transform-origin:0 0;">Subir Das</div>
<div class="a" style="left:1202px;top:829px;width:157px;height:131px;background:#3c4043;border-radius:8px"></div>
<svg style="left:1252px;top:865px;border-radius:50%" width="30" height="30" viewBox="0 0 48 48"><defs><clipPath id="av11"><circle cx="24" cy="24" r="24"/></clipPath></defs><g clip-path="url(#av11)"><rect width="48" height="48" fill="#b9a68c"/><path d="M4 48Q6 34 18 32H30Q42 34 44 48Z" fill="#34506c"/><rect x="20" y="27" width="8" height="7" fill="#a66d4c"/><ellipse cx="24" cy="21" rx="8" ry="10" fill="#a66d4c"/><path d="M15.5 20Q15 10 24 10Q33 10 32.5 20Q31 14 24 14Q17 14 15.5 20Z" fill="#1c1815"/></g></svg>
<div class="a" style="left:1281px;top:865px;width:30px;height:30px;border-radius:50%;background:#5e35b1"></div>
<div class="a" style="left:1290.00px;top:872.76px;font-size:18px;line-height:18px;color:#fff;white-space:nowrap;">B</div>
<div class="a" style="left:1371px;top:829px;width:157px;height:131px;background:#3c4043;border-radius:8px"></div>
<div class="a" style="left:1491px;top:841px;width:26px;height:26px;border-radius:50%;background:#333639"></div>
<svg style="left:1495px;top:845px;" width="18" height="18" viewBox="0 0 24 24"><path d="M12 14c1.66 0 3-1.34 3-3V5c0-1.66-1.34-3-3-3S9 3.34 9 5v6c0 1.66 1.34 3 3 3z" fill="#f1f3f4"/><path d="M17 11c0 2.76-2.24 5-5 5s-5-2.24-5-5H5c0 3.53 2.61 6.43 6 6.92V21h2v-3.08c3.39-.49 6-3.39 6-6.92h-2z" fill="#f1f3f4"/><path d="M3.5 3.5L20.5 20.5" stroke="#333639" stroke-width="3.2"/><path d="M3.5 3.5L20.5 20.5" stroke="#f1f3f4" stroke-width="1.8"/></svg>
<svg style="left:1426px;top:862px;border-radius:50%" width="48" height="48" viewBox="0 0 48 48"><defs><clipPath id="av12"><circle cx="24" cy="24" r="24"/></clipPath></defs><g clip-path="url(#av12)"><rect width="48" height="48" fill="#1a96e0"/><path d="M4 48Q6 34 18 32H30Q42 34 44 48Z" fill="#e6e6e6"/><rect x="20" y="27" width="8" height="7" fill="#c9a48c"/><ellipse cx="24" cy="21" rx="8" ry="10" fill="#c9a48c"/><path d="M15.5 20Q15 10 24 10Q33 10 32.5 20Q31 14 24 14Q17 14 15.5 20Z" fill="#151515"/></g></svg>
<div class="a" style="left:1160px;top:884px;width:360px;height:76px;background:#3c4043;border-radius:8px;box-shadow:0 1px 3px rgba(0,0,0,.4)"></div>
<div class="a" style="left:1160px;top:884px;width:136px;height:76px;background:#414447;border-radius:8px 0 0 8px"></div>
<svg style="left:1200px;top:894px;border-radius:50%" width="56" height="56" viewBox="0 0 48 48"><defs><clipPath id="av13"><circle cx="24" cy="24" r="24"/></clipPath></defs><g clip-path="url(#av13)"><rect width="48" height="48" fill="#ebe7d3"/><path d="M4 48Q6 34 18 32H30Q42 34 44 48Z" fill="#d8d3bd"/><rect x="20" y="27" width="8" height="7" fill="#b58563"/><ellipse cx="24" cy="21" rx="8" ry="10" fill="#b58563"/><path d="M15.5 20Q15 10 24 10Q33 10 32.5 20Q31 14 24 14Q17 14 15.5 20Z" fill="#1c1815"/><path d="M16 20H32" stroke="#444" stroke-width="1"/><path d="M12 48L16 34M36 48L32 34" stroke="#5a4a3a" stroke-width="2.5"/></g></svg>
<div class="a" style="left:1311.50px;top:915.30px;font-size:15px;line-height:15px;color:#e8eaed;font-weight:bold;white-space:nowrap;transform:scaleX(0.9280);transform-origin:0 0;">pushp raj joined</div>
<div class="a" style="left:24.00px;top:991.53px;font-size:16.5px;line-height:16.5px;color:#fff;font-weight:bold;white-space:nowrap;transform:scaleX(0.9447);transform-origin:0 0;">11:06 AM</div>
<div class="a" style="left:104px;top:992px;width:1.5px;height:16px;background:#e8eaed"></div>
<div class="a" style="left:117.00px;top:991.53px;font-size:16.5px;line-height:16.5px;color:#fff;font-weight:bold;white-space:nowrap;transform:scaleX(1.0040);transform-origin:0 0;">ruv-wkqx-qfh</div>
<div class="a" style="left:678px;top:976px;width:88px;height:48px;background:#601410;border-radius:16px"></div>
<div class="a" style="left:718px;top:976px;width:48px;height:48px;background:#c89b98;border-radius:16px"></div>
<svg style="left:695px;top:995px;" width="12" height="8" viewBox="0 0 12 8"><path d="M1.5 6.5L6 2L10.5 6.5" stroke="#f4d7d5" stroke-width="1.8" fill="none"/></svg>
<div class="a" style="left:750px;top:972px;width:20px;height:20px;border-radius:50%;background:#fddc7e"></div>
<div class="a" style="left:759px;top:975px;width:2px;height:9px;background:#5b4a1b"></div>
<div class="a" style="left:759px;top:986px;width:2px;height:2px;background:#5b4a1b"></div>
<div class="a" style="left:774px;top:976px;width:88px;height:48px;background:#601410;border-radius:16px"></div>
<div class="a" style="left:814px;top:976px;width:48px;height:48px;background:#c89b98;border-radius:16px"></div>
<svg style="left:791px;top:995px;" width="12" height="8" viewBox="0 0 12 8"><path d="M1.5 6.5L6 2L10.5 6.5" stroke="#f4d7d5" stroke-width="1.8" fill="none"/></svg>
<div class="a" style="left:846px;top:972px;width:20px;height:20px;border-radius:50%;background:#fddc7e"></div>
<div class="a" style="left:855px;top:975px;width:2px;height:9px;background:#5b4a1b"></div>
<div class="a" style="left:855px;top:986px;width:2px;height:2px;background:#5b4a1b"></div>
<svg style="left:733px;top:989px;" width="22" height="22" viewBox="0 0 24 24"><path d="M12 14c1.66 0 3-1.34 3-3V5c0-1.66-1.34-3-3-3S9 3.34 9 5v6c0 1.66 1.34 3 3 3z" fill="#6e302d"/><path d="M17 11c0 2.76-2.24 5-5 5s-5-2.24-5-5H5c0 3.53 2.61 6.43 6 6.92V21h2v-3.08c3.39-.49 6-3.39 6-6.92h-2z" fill="#6e302d"/><path d="M3.5 3.5L20.5 20.5" stroke="#c89b98" stroke-width="3.2"/><path d="M3.5 3.5L20.5 20.5" stroke="#6e302d" stroke-width="1.8"/></svg>
<svg style="left:827px;top:989px;" width="22" height="22" viewBox="0 0 22 24"><path d="M3 6H14V18H3Z" fill="none" stroke="#6e302d" stroke-width="1.8"/><path d="M15 10L20 7V17L15 14Z" fill="#6e302d"/><path d="M2 3L18 21" stroke="#c89b98" stroke-width="3"/><path d="M2 3L18 21" stroke="#6e302d" stroke-width="1.8"/></svg>
<div class="a" style="left:870px;top:976px;width:56px;height:48px;background:#333537;border-radius:24px"></div>
<div class="a" style="left:934px;top:976px;width:56px;height:48px;background:#333537;border-radius:24px"></div>
<div class="a" style="left:998px;top:976px;width:56px;height:48px;background:#333537;border-radius:24px"></div>
<div class="a" style="left:1062px;top:976px;width:56px;height:48px;background:#333537;border-radius:24px"></div>
<div class="a" style="left:1126px;top:976px;width:36px;height:48px;background:#333537;border-radius:24px"></div>
<svg style="left:888px;top:991px;" width="20" height="18" viewBox="0 0 20 18"><rect x="1" y="1" width="18" height="16" fill="none" stroke="#e3e3e3" stroke-width="2"/><path d="M8.5 7H5.5V11H8.5M14.5 7H11.5V11H14.5" stroke="#e3e3e3" stroke-width="1.8" fill="none"/></svg>
<svg style="left:951px;top:989px;" width="22" height="22" viewBox="0 0 22 22"><circle cx="11" cy="11" r="9.5" fill="none" stroke="#e3e3e3" stroke-width="1.9"/><circle cx="7.5" cy="8.5" r="1.5" fill="#e3e3e3"/><circle cx="14.5" cy="8.5" r="1.5" fill="#e3e3e3"/><path d="M6 12.5H16Q15 16.5 11 16.5Q7 16.5 6 12.5Z" fill="#e3e3e3"/></svg>
<svg style="left:1014px;top:990px;" width="24" height="20" viewBox="0 0 24 20"><rect x="1" y="1" width="22" height="18" fill="none" stroke="#e3e3e3" stroke-width="2"/><path d="M12 6L8 10H10.5V14H13.5V10H16Z" fill="#e3e3e3"/></svg>
<svg style="left:1079px;top:987px;" width="22" height="26" viewBox="0 0 22 26"><path d="M6 14V6Q6 4.5 7.3 4.5Q8.6 4.5 8.6 6V12M8.6 12V3Q8.6 1.5 9.9 1.5Q11.2 1.5 11.2 3V12M11.2 12V3.5Q11.2 2 12.5 2Q13.8 2 13.8 3.5V12M13.8 12V6Q13.8 4.5 15.1 4.5Q16.4 4.5 16.4 6V16Q16.4 24 10.5 24Q7 24 5 20L1.8 14.5Q1.2 13 2.5 12.5Q3.6 12.2 4.5 13.5L6 16" fill="none" stroke="#e3e3e3" stroke-width="1.7" stroke-linejoin="round"/></svg>
<div class="a" style="left:1141.4px;top:989.4px;width:5.2px;height:5.2px;border-radius:50%;background:#e3e3e3"></div>
<div class="a" style="left:1141.4px;top:997.4px;width:5.2px;height:5.2px;border-radius:50%;background:#e3e3e3"></div>
<div class="a" style="left:1141.4px;top:1005.4px;width:5.2px;height:5.2px;border-radius:50%;background:#e3e3e3"></div>
<div class="a" style="left:1170px;top:976px;width:72px;height:48px;background:#dc362e;border-radius:24px"></div>
<svg style="left:1194px;top:988px;" width="24" height="24" viewBox="0 0 24 24"><path d="M12 9c-1.6 0-3.15.25-4.6.72v3.1c0 .39-.23.74-.56.9-.98.49-1.87 1.12-2.66 1.85-.18.18-.43.28-.7.28-.28 0-.53-.11-.71-.29L.29 13.08c-.18-.17-.29-.42-.29-.7 0-.28.11-.53.29-.71C3.34 8.78 7.46 7 12 7s8.66 1.780 11.71 4.67c.18.18.29.43.29.71 0 .28-.11.53-.29.71l-2.48 2.48c-.18.18-.43.29-.71.29-.27 0-.52-.11-.7-.28-.79-.74-1.69-1.36-2.67-1.85-.33-.16-.56-.5-.56-.9v-3.1C15.15 9.25 13.6 9 12 9z" fill="#fff"/></svg>
<svg style="left:1729px;top:989px;" width="22" height="22" viewBox="0 0 22 22"><circle cx="11" cy="11" r="9.6" fill="none" stroke="#fff" stroke-width="2"/><rect x="10" y="9.5" width="2.2" height="7" fill="#fff"/><circle cx="11.1" cy="6.5" r="1.3" fill="#fff"/></svg>
<svg style="left:1776px;top:990px;" width="24" height="18" viewBox="0 0 24 18"><circle cx="8.5" cy="5" r="4" fill="#a8c7fa"/><circle cx="16.5" cy="5" r="3.6" fill="#a8c7fa"/><path d="M0.5 17V14.5Q0.5 10.5 8.5 10.5Q16.5 10.5 16.5 14.5V17Z" fill="#a8c7fa"/><path d="M17.5 10.7Q23.5 11.2 23.5 14.5V17H18V14.5Q18 12.5 17.5 10.7Z" fill="#a8c7fa"/></svg>
<div class="a" style="left:1789px;top:967px;width:26px;height:20px;background:#5f6368;border-radius:10px"></div>
<div class="a" style="left:1795.33px;top:971.84px;font-size:12px;line-height:12px;color:#fff;font-weight:bold;white-space:nowrap;">19</div>
<svg style="left:1825px;top:990px;" width="22" height="22" viewBox="0 0 22 22"><path d="M2 1.5H20V15.5H6L2 19.5Z" fill="none" stroke="#fff" stroke-width="2" stroke-linejoin="round"/><path d="M5.5 5.5H16.5M5.5 8.5H16.5M5.5 11.5H12" stroke="#fff" stroke-width="1.8"/></svg>
<svg style="left:1873px;top:989px;" width="22" height="22" viewBox="0 0 22 22"><path d="M11 1.5L15 8H7Z" fill="none" stroke="#fff" stroke-width="2" stroke-linejoin="round"/><rect x="1.5" y="12" width="7.5" height="7.5" fill="none" stroke="#fff" stroke-width="2"/><circle cx="16.5" cy="15.8" r="3.8" fill="none" stroke="#fff" stroke-width="2"/></svg>
<div class="a" style="left:0px;top:1040px;width:1920px;height:40px;background:#eee3d8"></div>
<svg style="left:16px;top:1051px;" width="17" height="17" viewBox="0 0 17 17"><path d="M0 2.3L7 1.3V7.8H0Z M8 1.1L17 0V7.8H8Z M0 9H7V15.6L0 14.6Z M8 9H17V17L8 15.8Z" fill="#111"/></svg>
<div class="a" style="left:48px;top:1040px;width:288px;height:40px;background:#fff"></div>
<svg style="left:59px;top:1051px;" width="19" height="19" viewBox="0 0 19 19"><circle cx="11.5" cy="7.5" r="6" fill="none" stroke="#222" stroke-width="1.5"/><path d="M7.3 11.7L1 18" stroke="#222" stroke-width="1.7"/></svg>
<div class="a" style="left:88.00px;top:1053.80px;font-size:15px;line-height:15px;color:#333;white-space:nowrap;transform:scaleX(0.9579);transform-origin:0 0;">Type here to search</div>
<svg style="left:262px;top:1040px;" width="74" height="40" viewBox="262 1040 74 40"><defs><radialGradient id="spc" cx="297" cy="1072" r="34" gradientUnits="userSpaceOnUse"><stop offset="0" stop-color="#152a78"/><stop offset=".45" stop-color="#2d4590"/><stop offset=".8" stop-color="#b7bfd8"/><stop offset="1" stop-color="#fff" stop-opacity="0"/></radialGradient><radialGradient id="pln" cx="306" cy="1041" r="30" gradientUnits="userSpaceOnUse"><stop offset="0" stop-color="#8e1a52"/><stop offset=".35" stop-color="#b2157c"/><stop offset=".75" stop-color="#d8406a"/><stop offset="1" stop-color="#f4a080"/></radialGradient><clipPath id="tbc"><rect x="262" y="1040" width="74" height="40"/></clipPath></defs><g clip-path="url(#tbc)"><rect x="262" y="1040" width="74" height="40" fill="#fff"/><ellipse cx="297" cy="1074" rx="36" ry="30" fill="url(#spc)"/><circle cx="313" cy="1045" r="23" fill="url(#pln)"/><circle cx="268.3" cy="1070.3" r="4.6" fill="#4f8a9c"/><path d="M266 1046Q270 1043 274 1047L292 1064L287 1069L268 1052Q263 1049 266 1046Z" fill="#c9c6c9"/><path d="M282 1060L291 1068L288 1071L279 1063Z" fill="#b9b6ba"/><path d="M290 1067L298 1073L296 1075L288 1069Z" fill="#bfe6fb"/><circle cx="282.5" cy="1046.5" r=".8" fill="#f2e6b0"/><circle cx="275.5" cy="1068.5" r=".8" fill="#f2e6b0"/><circle cx="288" cy="1073" r="1" fill="#f2e6b0"/><circle cx="313.5" cy="1072" r=".8" fill="#f2e6b0"/><circle cx="322" cy="1072.5" r=".8" fill="#f2e6b0"/></g></svg>
<svg style="left:350px;top:1050px;" width="20" height="18" viewBox="0 0 20 18"><rect x="2" y="3" width="12" height="12" fill="none" stroke="#111" stroke-width="1.6"/><path d="M0 1H16M0 17H16" stroke="#111" stroke-width="1.6"/><rect x="17" y="3" width="3" height="3" fill="#111"/><rect x="17" y="8" width="3" height="7" fill="#111"/></svg>
<svg style="left:399px;top:1049px;" width="24" height="21" viewBox="0 0 24 21"><defs><linearGradient id="cpl" x1="0" y1="0" x2="0" y2="1"><stop offset="0" stop-color="#1aa0f5"/><stop offset=".5" stop-color="#3aa860"/><stop offset="1" stop-color="#f5c800"/></linearGradient><linearGradient id="cpr" x1="0" y1="0" x2="0" y2="1"><stop offset="0" stop-color="#b04ef0"/><stop offset=".5" stop-color="#f55a88"/><stop offset="1" stop-color="#fba050"/></linearGradient></defs><path d="M5.5 0H14Q16 0 16.5 2L18 6.5H9.5L6 16.5Q5.3 18.5 3.5 18.5H2Q-0.2 18.5 0.3 16L3 3Q3.6 0 5.5 0Z" fill="url(#cpl)"/><path d="M18.5 21H10Q8 21 7.5 19L6 14.5H14.5L18 4.5Q18.7 2.5 20.5 2.5H22Q24.2 2.5 23.7 5L21 18Q20.4 21 18.5 21Z" fill="url(#cpr)"/><path d="M14 0Q16 0 16.5 2L18 6.5H13Z" fill="#1a4ad8"/><path d="M10 21Q8 21 7.5 19L6 14.5H11Z" fill="#e8442a"/></svg>
<svg style="left:448px;top:1048px;" width="24" height="24" viewBox="0 0 24 24"><defs><linearGradient id="eg" x1="0" y1="1" x2="1" y2="0"><stop offset="0" stop-color="#0b63c4"/><stop offset=".45" stop-color="#1a9ae0"/><stop offset=".7" stop-color="#2cc4c8"/><stop offset="1" stop-color="#5ae050"/></linearGradient></defs><circle cx="12" cy="12" r="12" fill="url(#eg)"/><path d="M0.5 14Q1 7 8 6Q15 5.5 18 11Q14 7 10 9Q6 11 7 17Q8 22 15 23.5Q8 24.5 3.5 20Q0.5 17.5 0.5 14Z" fill="#1a86dc"/><path d="M7.5 15Q8 21 14.5 22Q20 22 23 17Q20 20 15 19.5Q10 19 10 14Z" fill="#0d4f9c"/><circle cx="12.5" cy="12.8" r="3" fill="#eee3d8"/><path d="M12.5 15.5Q17 17.5 24 15.5V13Q18 15 13 12Z" fill="#eee3d8"/><path d="M15.5 12.5Q18.5 13 23.5 11.5V15Q18 16 15 14Z" fill="#3cd070"/></svg>
<svg style="left:496px;top:1048px;" width="25" height="22" viewBox="0 0 25 22"><path d="M0 2H9L11 4H25V20H0Z" fill="#e8b128"/><rect x="0" y="6" width="25" height="15" fill="#ffd35c"/><rect x="7" y="12" width="11" height="7" fill="#2a74d6"/><rect x="10" y="15" width="5" height="4" fill="#ffd35c"/></svg>
<div class="a" style="left:489px;top:1078px;width:33px;height:2px;background:#2c6fce"></div>
<div class="a" style="left:522px;top:1078px;width:7px;height:2px;background:#8fb1e3"></div>
<svg style="left:545px;top:1047px;" width="26" height="24" viewBox="0 0 26 24"><path d="M0 8L13 0L26 8V24H0Z" fill="#0f6cbd"/><rect x="1" y="8" width="24" height="16" fill="#28a8ea"/><path d="M1 8L13 16L25 8" fill="none" stroke="#fff" stroke-width="1.4"/></svg>
<div class="a" style="left:594.5px;top:1047px;width:24px;height:24px;border-radius:50%;background:#0b5cff"></div>
<div class="a" style="left:598.86px;top:1054.19px;font-size:11px;line-height:11px;color:#fff;font-weight:bold;white-space:nowrap;">zm</div>
<svg style="left:642px;top:1047px;" width="26" height="25" viewBox="0 0 26 25"><rect x="7" y="1" width="18" height="18" fill="#eef2f8" stroke="#9fb0c8" stroke-width=".8"/><path d="M7 7H25M7 13H25M13 1V19M19 1V19" stroke="#aab8d0" stroke-width=".6"/><circle cx="11" cy="14" r="9.5" fill="#ef8d86" opacity=".85"/><circle cx="10" cy="12" r="5" fill="#f6c0b8" opacity=".8"/><path d="M4 17L9 11L13 14L18 6" stroke="#2d4fb0" stroke-width="1.3" fill="none"/></svg>
<svg style="left:788px;top:1047px;" width="26" height="25" viewBox="0 0 26 25"><rect x="7" y="1" width="18" height="18" fill="#eef2f8" stroke="#9fb0c8" stroke-width=".8"/><path d="M7 7H25M7 13H25M13 1V19M19 1V19" stroke="#aab8d0" stroke-width=".6"/><circle cx="11" cy="14" r="9.5" fill="#ef8d86" opacity=".85"/><circle cx="10" cy="12" r="5" fill="#f6c0b8" opacity=".8"/><path d="M4 17L9 11L13 14L18 6" stroke="#2d4fb0" stroke-width="1.3" fill="none"/></svg>
<svg style="left:692px;top:1047px;" width="27" height="25" viewBox="0 0 27 25"><rect x="9" y="2" width="17" height="21" rx="2" fill="#28a8ea"/><path d="M12 11L26 20V23H12Z" fill="#0a5fb4"/><rect x="0" y="5" width="15" height="15" rx="2" fill="#0f6cbd"/><ellipse cx="7.5" cy="12.5" rx="3.6" ry="4.3" fill="none" stroke="#fff" stroke-width="2"/></svg>
<div class="a" style="left:730px;top:1040px;width:48px;height:40px;background:#f6efe8"></div>
<svg style="left:742px;top:1047px;" width="25" height="25" viewBox="0 0 25 25"><circle cx="12.5" cy="12.5" r="12" fill="#db4437"/><path d="M12.5 12.5L2.1 18.5A12 12 0 0 1 1.8 6.9Z" fill="#0f9d58"/><path d="M12.5 12.5L2.1 18.5A12 12 0 0 0 23 18.5Z" fill="#0f9d58"/><path d="M12.5 12.5L23 18.5A12 12 0 0 0 24.2 9.5L12.5 6.5Z" fill="#ffcd40"/><path d="M12.5 6.5H24.2A12 12 0 0 1 23 18.5L17.7 15.5Z" fill="#ffcd40"/><circle cx="12.5" cy="12.5" r="5.6" fill="#fff"/><circle cx="12.5" cy="12.5" r="4.5" fill="#4285f4"/></svg>
<div class="a" style="left:730px;top:1078px;width:48px;height:2px;background:#2c6fce"></div>
<svg style="left:840px;top:1048px;" width="23" height="23" viewBox="0 0 23 23"><rect width="23" height="23" rx="3" fill="#b30b00"/><path d="M5 17Q8 13 11.5 6Q13 3 12 8Q11 12 18 15Q19 16 16 16Q11 15 5 17Z" fill="none" stroke="#fff" stroke-width="1.6"/></svg>
<div class="a" style="left:832px;top:1078px;width:33px;height:2px;background:#2c6fce"></div>
<div class="a" style="left:865px;top:1078px;width:7px;height:2px;background:#8fb1e3"></div>
<svg style="left:1527px;top:1049px;" width="23" height="22" viewBox="0 0 23 22"><path d="M1 2Q8 3 14 10" stroke="#d2471f" stroke-width="2.6" fill="none"/><path d="M10 7L17 12L16 4Z" fill="#d2471f"/><rect x="0" y="13" width="3.5" height="9" fill="#d2471f"/><rect x="5.5" y="16" width="3.5" height="6" fill="#d2471f"/><rect x="11" y="19" width="3.5" height="3" fill="#d2471f"/><rect x="16.5" y="20" width="3.5" height="2" fill="#d2471f"/></svg>
<div class="a" style="left:1558.00px;top:1053.40px;font-size:13.7px;line-height:13.7px;color:#1b1b1b;white-space:nowrap;transform:scaleX(0.9096);transform-origin:0 0;">NIFTY</div>
<div class="a" style="left:1603.50px;top:1053.40px;font-size:13.7px;line-height:13.7px;color:#c42b1c;white-space:nowrap;transform:scaleX(0.9675);transform-origin:0 0;">-0.03%</div>
<svg style="left:1670px;top:1054px;" width="14" height="9" viewBox="0 0 14 9"><path d="M1 8L7 2L13 8" stroke="#1b1b1b" stroke-width="1.4" fill="none"/></svg>
<svg style="left:1692px;top:1052px;" width="19" height="17" viewBox="0 0 19 17"><path d="M1 2L16 0V14L1 13Z" fill="none" stroke="#1b1b1b" stroke-width="1.3"/><path d="M6 9L10 5M8 5H10V7" stroke="#1b1b1b" stroke-width="1.2" fill="none"/><circle cx="13" cy="13" r="3" fill="#1e6fd9"/></svg>
<svg style="left:1716px;top:1052px;" width="18" height="16" viewBox="0 0 18 16"><rect x="4" y="2" width="13" height="9" fill="none" stroke="#1b1b1b" stroke-width="1.2"/><rect x="0.5" y="0.5" width="4" height="3.5" fill="none" stroke="#1b1b1b" stroke-width="1"/><path d="M10 11V14M7 14.5H13" stroke="#1b1b1b" stroke-width="1.2"/></svg>
<svg style="left:1742px;top:1051px;" width="14" height="18" viewBox="0 0 14 18"><rect x="1" y="5" width="8" height="8" fill="none" stroke="#1b1b1b" stroke-width="1.2"/><path d="M9 8L13 6V12L9 10Z" fill="none" stroke="#1b1b1b" stroke-width="1.1"/><path d="M2 2Q7 0 11 2M2 16Q7 18 11 16" stroke="#1b1b1b" stroke-width="1" fill="none"/></svg>
<div class="a" style="left:1767.30px;top:1053.40px;font-size:13.7px;line-height:13.7px;color:#1b1b1b;white-space:nowrap;transform:scaleX(0.7410);transform-origin:0 0;">ENG</div>
<div class="a" style="left:1818.70px;top:1043.40px;font-size:13.7px;line-height:13.7px;color:#1b1b1b;white-space:nowrap;transform:scaleX(0.7815);transform-origin:0 0;">11:06</div>
<div class="a" style="left:1803.00px;top:1061.10px;font-size:13.7px;line-height:13.7px;color:#1b1b1b;white-space:nowrap;transform:scaleX(0.8276);transform-origin:0 0;">04-10-2024</div>
<svg style="left:1879px;top:1052px;" width="17" height="15" viewBox="0 0 17 15"><path d="M0.5 0.5H16.5V11.5H5L0.5 15Z" fill="#1b1b1b"/><path d="M3 4H14M3 7H14" stroke="#eee3d8" stroke-width="1"/></svg>
<div class="a" style="left:1886.5px;top:1059.5px;width:16px;height:16px;border-radius:50%;background:#e3dcd4;border:1px solid #8a8580"></div>
<div class="a" style="left:1891.44px;top:1062.69px;font-size:11px;line-height:11px;color:#1b1b1b;white-space:nowrap;">2</div>
<div class="a" style="left:1915px;top:1040px;width:1px;height:40px;background:#b8aea4"></div>
</body></html>
